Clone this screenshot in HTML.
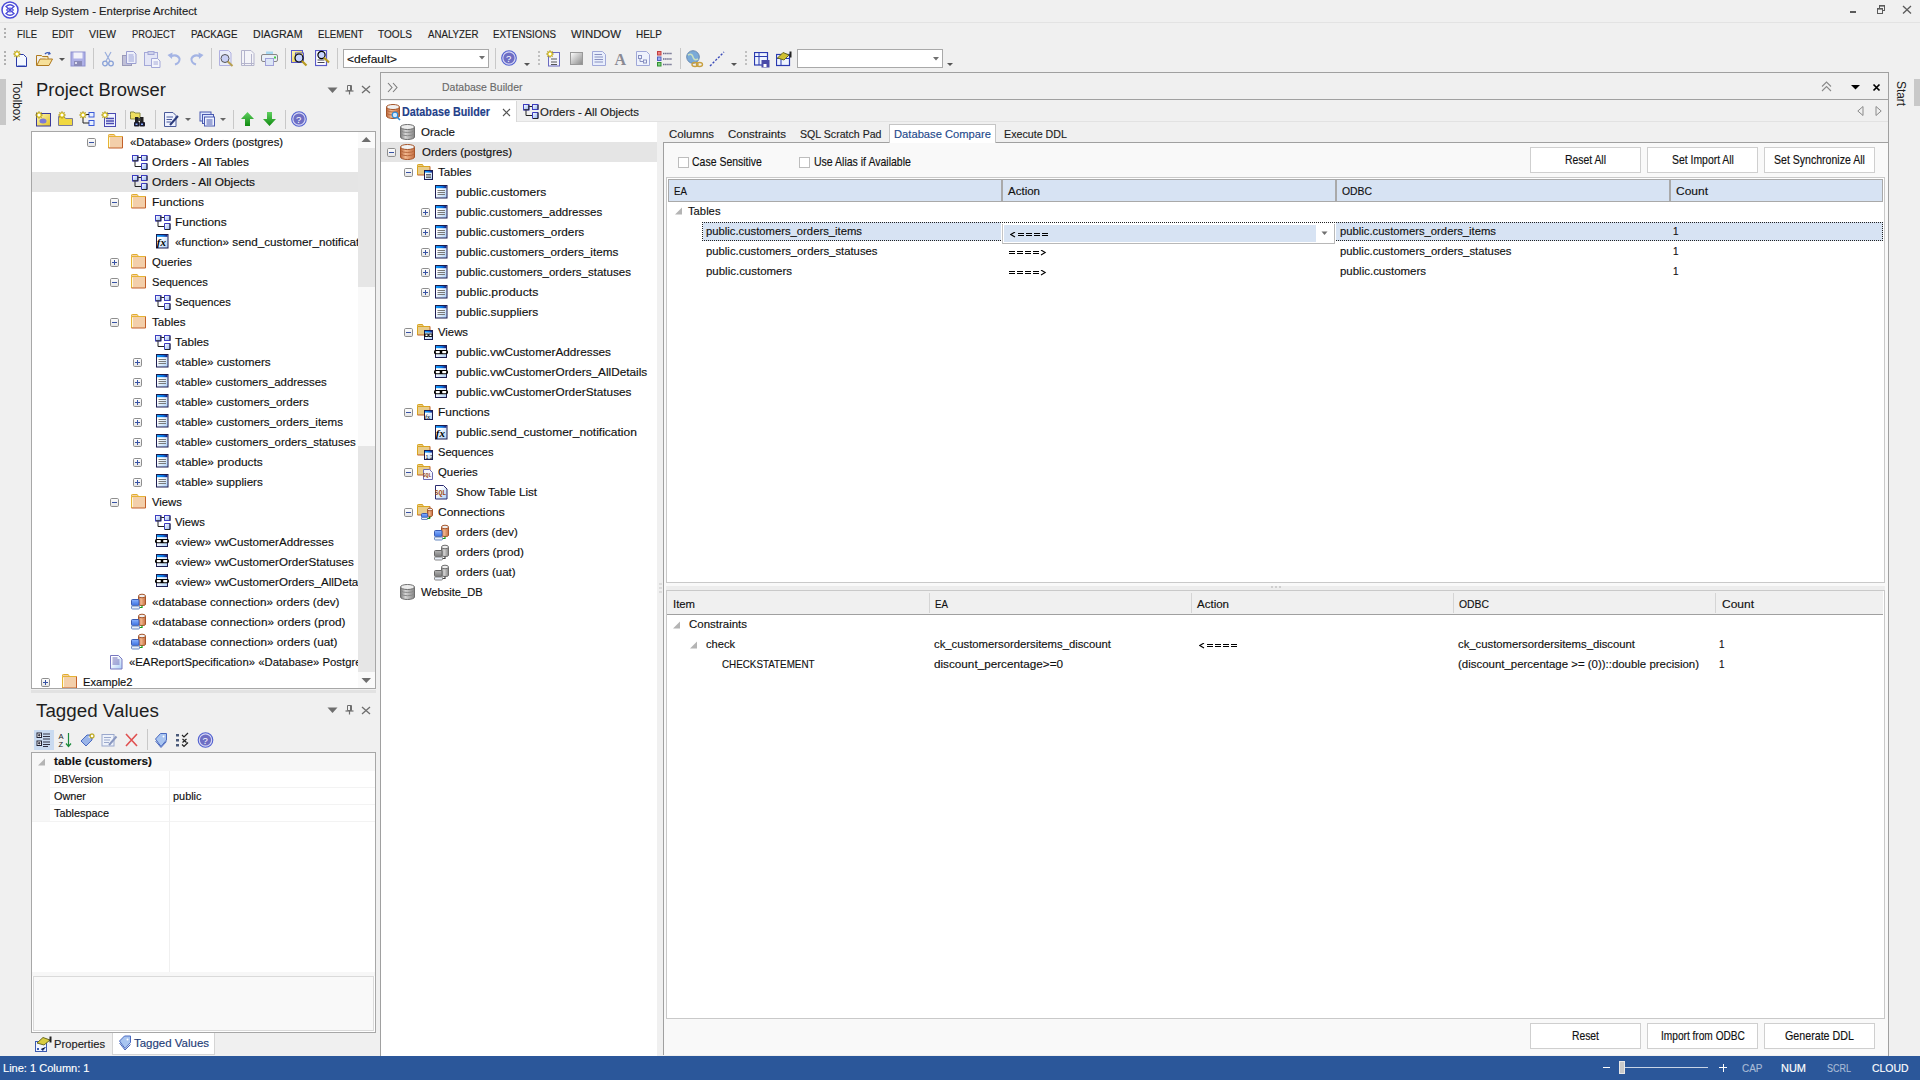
<!DOCTYPE html>
<html><head><meta charset="utf-8"><style>
html,body{margin:0;padding:0;}
body{width:1920px;height:1080px;overflow:hidden;background:#f0f0f0;position:relative;font-family:"Liberation Sans",sans-serif;}
div{position:absolute;box-sizing:border-box;}
.t{white-space:pre;line-height:1;transform-origin:0 0;}
</style></head><body>
<svg width="0" height="0" style="position:absolute"><defs>
<linearGradient id="gTog" x1="0" y1="0" x2="0" y2="1"><stop offset="0" stop-color="#ffffff"/><stop offset="1" stop-color="#e4e4e4"/></linearGradient>
<linearGradient id="gCylO" x1="0" y1="0" x2="1" y2="0"><stop offset="0" stop-color="#b8653a"/><stop offset="0.35" stop-color="#f3b88e"/><stop offset="1" stop-color="#c46f42"/></linearGradient>
<linearGradient id="gCylG" x1="0" y1="0" x2="1" y2="0"><stop offset="0" stop-color="#7a7a7a"/><stop offset="0.35" stop-color="#d6d6d6"/><stop offset="1" stop-color="#868686"/></linearGradient>
<linearGradient id="gBar" x1="0" y1="0" x2="1" y2="0"><stop offset="0" stop-color="#10a0ff"/><stop offset="0.6" stop-color="#0a70e0"/><stop offset="1" stop-color="#141e7a"/></linearGradient>
<linearGradient id="gBody" x1="0" y1="0" x2="1" y2="1"><stop offset="0.3" stop-color="#ffffff"/><stop offset="1" stop-color="#a9cdf5"/></linearGradient>
<linearGradient id="gSq" x1="0" y1="0" x2="1" y2="1"><stop offset="0" stop-color="#ffffff"/><stop offset="1" stop-color="#8fb0f0"/></linearGradient>
<linearGradient id="gMon" x1="0" y1="0" x2="0" y2="1"><stop offset="0" stop-color="#8ab4ff"/><stop offset="1" stop-color="#3a6fe0"/></linearGradient>
<linearGradient id="gMonG" x1="0" y1="0" x2="0" y2="1"><stop offset="0" stop-color="#b8b8b8"/><stop offset="1" stop-color="#787878"/></linearGradient>
<linearGradient id="gHelp" x1="0" y1="0" x2="0" y2="1"><stop offset="0" stop-color="#9a9ae0"/><stop offset="1" stop-color="#5a5ab8"/></linearGradient>
<linearGradient id="gYel" x1="0" y1="0" x2="1" y2="1"><stop offset="0" stop-color="#fff8c0"/><stop offset="1" stop-color="#e0c020"/></linearGradient>
<linearGradient id="gGrn" x1="0" y1="0" x2="0" y2="1"><stop offset="0" stop-color="#60d060"/><stop offset="1" stop-color="#108a10"/></linearGradient>
</defs></svg>
<div style="left:0px;top:22px;width:1920px;height:1px;background:#e3e3e3"></div>
<div class="t" style="left:25px;top:6px;font-size:11.5px;color:#222;-webkit-text-stroke:0.15px #222;transform:scaleX(0.9822);">Help System - Enterprise Architect</div>
<div style="left:1850px;top:11px;width:6px;height:2px;background:#5a5a5a"></div>
<svg style="position:absolute;left:1876px;top:4px" width="10" height="11" viewBox="0 0 10 11"><rect x="3.5" y="1.5" width="5" height="5" fill="none" stroke="#5a5a5a"/><rect x="3" y="1" width="6" height="1.6" fill="#5a5a5a"/><rect x="1.5" y="4.5" width="5" height="5" fill="#f0f0f0" stroke="#5a5a5a"/><rect x="1" y="4" width="6" height="1.6" fill="#5a5a5a"/></svg>
<svg style="position:absolute;left:1902px;top:5px" width="10" height="9" viewBox="0 0 10 9"><path d="M1 1L9 8.5M9 1L1 8.5" stroke="#5a5a5a" stroke-width="1.3"/></svg>
<div style="left:4px;top:28px;width:2px;height:2px;background:#b0b0b0"></div>
<div style="left:4px;top:32px;width:2px;height:2px;background:#b0b0b0"></div>
<div style="left:4px;top:36px;width:2px;height:2px;background:#b0b0b0"></div>
<div class="t" style="left:17px;top:29px;font-size:11.4px;color:#1e1e1e;-webkit-text-stroke:0.15px #1e1e1e;transform:scaleX(0.8307);">FILE</div>
<div class="t" style="left:52px;top:29px;font-size:11.4px;color:#1e1e1e;-webkit-text-stroke:0.15px #1e1e1e;transform:scaleX(0.8472);">EDIT</div>
<div class="t" style="left:89px;top:29px;font-size:11.4px;color:#1e1e1e;-webkit-text-stroke:0.15px #1e1e1e;transform:scaleX(0.9267);">VIEW</div>
<div class="t" style="left:131.5px;top:29px;font-size:11.4px;color:#1e1e1e;-webkit-text-stroke:0.15px #1e1e1e;transform:scaleX(0.8176);">PROJECT</div>
<div class="t" style="left:190.5px;top:29px;font-size:11.4px;color:#1e1e1e;-webkit-text-stroke:0.15px #1e1e1e;transform:scaleX(0.8568);">PACKAGE</div>
<div class="t" style="left:252.5px;top:29px;font-size:11.4px;color:#1e1e1e;-webkit-text-stroke:0.15px #1e1e1e;transform:scaleX(0.9304);">DIAGRAM</div>
<div class="t" style="left:317.5px;top:29px;font-size:11.4px;color:#1e1e1e;-webkit-text-stroke:0.15px #1e1e1e;transform:scaleX(0.8450);">ELEMENT</div>
<div class="t" style="left:378px;top:29px;font-size:11.4px;color:#1e1e1e;-webkit-text-stroke:0.15px #1e1e1e;transform:scaleX(0.8846);">TOOLS</div>
<div class="t" style="left:427.5px;top:29px;font-size:11.4px;color:#1e1e1e;-webkit-text-stroke:0.15px #1e1e1e;transform:scaleX(0.8510);">ANALYZER</div>
<div class="t" style="left:493px;top:29px;font-size:11.4px;color:#1e1e1e;-webkit-text-stroke:0.15px #1e1e1e;transform:scaleX(0.8573);">EXTENSIONS</div>
<div class="t" style="left:571px;top:29px;font-size:11.4px;color:#1e1e1e;-webkit-text-stroke:0.15px #1e1e1e;transform:scaleX(0.9996);">WINDOW</div>
<div class="t" style="left:636px;top:29px;font-size:11.4px;color:#1e1e1e;-webkit-text-stroke:0.15px #1e1e1e;transform:scaleX(0.8730);">HELP</div>
<div style="left:4px;top:51px;width:2px;height:2px;background:#b0b0b0"></div>
<div style="left:4px;top:55px;width:2px;height:2px;background:#b0b0b0"></div>
<div style="left:4px;top:59px;width:2px;height:2px;background:#b0b0b0"></div>
<div style="left:4px;top:63px;width:2px;height:2px;background:#b0b0b0"></div>
<div style="left:93px;top:48px;width:1px;height:21px;background:#c8c8c8"></div>
<div style="left:211px;top:48px;width:1px;height:21px;background:#c8c8c8"></div>
<div style="left:285px;top:48px;width:1px;height:21px;background:#c8c8c8"></div>
<div style="left:337px;top:48px;width:1px;height:21px;background:#c8c8c8"></div>
<div style="left:495px;top:48px;width:1px;height:21px;background:#c8c8c8"></div>
<div style="left:680px;top:48px;width:1px;height:21px;background:#c8c8c8"></div>
<div style="left:343px;top:49px;width:146px;height:19px;background:#fff;border:1px solid #a9a9a9"></div>
<div class="t" style="left:347px;top:54px;font-size:11.5px;color:#111;-webkit-text-stroke:0.15px #111;transform:scaleX(1.0425);">&lt;default&gt;</div>
<svg style="position:absolute;left:479px;top:56px" width="7" height="4" viewBox="0 0 7 4"><path d="M0 0H6L3 3.5Z" fill="#707070"/></svg>
<div style="left:797px;top:49px;width:146px;height:19px;background:#fff;border:1px solid #a9a9a9"></div>
<svg style="position:absolute;left:933px;top:57px" width="7" height="4" viewBox="0 0 7 4"><path d="M0 0H6L3 3.5Z" fill="#707070"/></svg>
<svg style="position:absolute;left:947px;top:63px" width="7" height="4" viewBox="0 0 7 4"><path d="M0 0H6L3 3Z" fill="#555"/></svg>
<div style="left:0px;top:79px;width:6px;height:46px;background:#c8c8c8"></div>
<div class="t" style="left:22.5px;top:81px;font-size:12.5px;color:#222;transform:rotate(90deg) scaleX(0.93);transform-origin:0 0;">Toolbox</div>
<div class="t" style="left:36px;top:81px;font-size:18.8px;color:#1e1e1e;transform:scaleX(0.9797);">Project Browser</div>
<svg style="position:absolute;left:327px;top:87px" width="11" height="7" viewBox="0 0 11 7"><path d="M0.5 0.5H10.5L5.5 6Z" fill="#6e6e6e"/></svg>
<svg style="position:absolute;left:345px;top:84px" width="9" height="11" viewBox="0 0 9 11"><path d="M2.5 1.5H6.5V6.5H2.5Z" stroke="#6e6e6e" stroke-width="1" fill="none"/><path d="M5.5 1.5V6.5" stroke="#6e6e6e" stroke-width="1"/><path d="M0.5 7H8.5" stroke="#6e6e6e" stroke-width="1.2"/><path d="M4.5 7V10.5" stroke="#6e6e6e" stroke-width="1.2"/></svg>
<svg style="position:absolute;left:361px;top:85px" width="10" height="9" viewBox="0 0 10 9"><path d="M1 1L9 8M9 1L1 8" stroke="#6e6e6e" stroke-width="1.3"/></svg>
<div style="left:31px;top:131px;width:345px;height:558px;background:#fff;border:1px solid #a7a7a7"></div>
<div style="left:358px;top:132px;width:17px;height:556px;background:#e6e6e6"></div>
<div style="left:358px;top:132px;width:17px;height:16px;background:#fafafa"></div>
<svg style="position:absolute;left:361px;top:136px" width="11" height="7" viewBox="0 0 11 7"><path d="M0.5 6H10L5.25 1Z" fill="#6e6e6e"/></svg>
<div style="left:358px;top:287px;width:17px;height:159px;background:#f9f9f9"></div>
<div style="left:358px;top:672px;width:17px;height:16px;background:#fafafa"></div>
<svg style="position:absolute;left:361px;top:677px" width="11" height="7" viewBox="0 0 11 7"><path d="M0.5 1H10L5.25 6Z" fill="#6e6e6e"/></svg>
<div style="left:32px;top:172px;width:326px;height:20px;background:#e5e5e5"></div>
<div style="left:31px;top:690px;width:345px;height:3px;background:#e2e2e2"></div>
<div class="t" style="left:35.5px;top:702px;font-size:18.8px;color:#1e1e1e;transform:scaleX(1.0001);">Tagged Values</div>
<svg style="position:absolute;left:327px;top:707px" width="11" height="7" viewBox="0 0 11 7"><path d="M0.5 0.5H10.5L5.5 6Z" fill="#6e6e6e"/></svg>
<svg style="position:absolute;left:345px;top:704px" width="9" height="11" viewBox="0 0 9 11"><path d="M2.5 1.5H6.5V6.5H2.5Z" stroke="#6e6e6e" stroke-width="1" fill="none"/><path d="M5.5 1.5V6.5" stroke="#6e6e6e" stroke-width="1"/><path d="M0.5 7H8.5" stroke="#6e6e6e" stroke-width="1.2"/><path d="M4.5 7V10.5" stroke="#6e6e6e" stroke-width="1.2"/></svg>
<svg style="position:absolute;left:361px;top:706px" width="10" height="9" viewBox="0 0 10 9"><path d="M1 1L9 8M9 1L1 8" stroke="#6e6e6e" stroke-width="1.3"/></svg>
<div style="left:34px;top:730px;width:20px;height:20px;background:#c9daf0"></div>
<div style="left:147px;top:729px;width:1px;height:21px;background:#c8c8c8"></div>
<div style="left:31px;top:752px;width:345px;height:281px;background:#fff;border:1px solid #a7a7a7"></div>
<div style="left:32px;top:753px;width:343px;height:18px;background:#f7f7f7"></div>
<div style="left:32px;top:771px;width:18px;height:51px;background:#f7f7f7"></div>
<div style="left:32px;top:821px;width:343px;height:1px;background:#f3f3f3"></div>
<div style="left:50px;top:787px;width:325px;height:1px;background:#f3f3f3"></div>
<div style="left:50px;top:804px;width:325px;height:1px;background:#f3f3f3"></div>
<div style="left:169px;top:771px;width:1px;height:201px;background:#f0f0f0"></div>
<div style="left:32px;top:972px;width:343px;height:4px;background:#f7f7f7"></div>
<div style="left:33px;top:976px;width:341px;height:55px;background:#f9f9f9;border:1px solid #dadada"></div>
<svg style="position:absolute;left:38px;top:758px" width="8" height="8" viewBox="0 0 8 8"><path d="M7 0.5V7.5H0Z" fill="#b4b4b4"/></svg>
<div class="t" style="left:53.5px;top:755px;font-size:11.6px;color:#111;font-weight:bold;-webkit-text-stroke:0.15px #111;transform:scaleX(1.0135);">table (customers)</div>
<div class="t" style="left:54px;top:773px;font-size:11.6px;color:#111;-webkit-text-stroke:0.15px #111;transform:scaleX(0.8940);">DBVersion</div>
<div class="t" style="left:53.5px;top:790px;font-size:11.6px;color:#111;-webkit-text-stroke:0.15px #111;transform:scaleX(0.9366);">Owner</div>
<div class="t" style="left:173px;top:790px;font-size:11.6px;color:#111;-webkit-text-stroke:0.15px #111;transform:scaleX(0.9403);">public</div>
<div class="t" style="left:54px;top:807px;font-size:11.6px;color:#111;-webkit-text-stroke:0.15px #111;transform:scaleX(0.9372);">Tablespace</div>
<div style="left:112px;top:1033px;width:103px;height:22px;background:#fff;border:1px solid #d5d5d5;border-top:none"></div>
<div class="t" style="left:53.5px;top:1039px;font-size:11.5px;color:#222;-webkit-text-stroke:0.15px #222;transform:scaleX(0.9730);">Properties</div>
<div class="t" style="left:134px;top:1038px;font-size:11.5px;color:#1e3d78;-webkit-text-stroke:0.15px #1e3d78;transform:scaleX(0.9969);">Tagged Values</div>
<div style="left:380px;top:72px;width:1px;height:984px;background:#a0a0a0"></div>
<div style="left:0px;top:1056px;width:1920px;height:24px;background:#2b579a"></div>
<div class="t" style="left:2.5px;top:1063px;font-size:11.5px;color:#fff;-webkit-text-stroke:0.15px #fff;transform:scaleX(0.9596);">Line: 1 Column: 1</div>
<div style="left:1603px;top:1067px;width:7px;height:1px;background:#fff"></div>
<div style="left:1621px;top:1067px;width:87px;height:1px;background:#c8d4e6"></div>
<div style="left:1619px;top:1061px;width:6px;height:13px;background:#c9c9c9;border:1px solid #e8e8e8"></div>
<div style="left:1719px;top:1067px;width:8px;height:1px;background:#fff"></div>
<div style="left:1722.5px;top:1063.5px;width:1px;height:8px;background:#fff"></div>
<div class="t" style="left:1741.5px;top:1063px;font-size:11.5px;color:#a9bbd6;-webkit-text-stroke:0.15px #a9bbd6;transform:scaleX(0.8669);">CAP</div>
<div class="t" style="left:1781px;top:1063px;font-size:11.5px;color:#fff;-webkit-text-stroke:0.15px #fff;transform:scaleX(0.9545);">NUM</div>
<div class="t" style="left:1827px;top:1063px;font-size:11.5px;color:#a9bbd6;-webkit-text-stroke:0.15px #a9bbd6;transform:scaleX(0.7823);">SCRL</div>
<div class="t" style="left:1871.5px;top:1063px;font-size:11.5px;color:#fff;-webkit-text-stroke:0.15px #fff;transform:scaleX(0.9067);">CLOUD</div>
<div style="left:1914px;top:79px;width:6px;height:27px;background:#c8c8c8"></div>
<div class="t" style="left:1907px;top:81px;font-size:12.5px;color:#222;transform:rotate(90deg) scaleX(0.95);transform-origin:0 0;">Start</div>
<div style="left:381px;top:72px;width:1508px;height:984px;border-top:1px solid #a0a0a0;border-right:1px solid #a0a0a0;background:#f0f0f0"></div>
<div style="left:381px;top:99px;width:1507px;height:1px;background:#a0a0a0"></div>
<svg style="position:absolute;left:387px;top:82px" width="12" height="11" viewBox="0 0 12 11"><path d="M1 1L5 5.5L1 10M6 1L10 5.5L6 10" stroke="#7a7a7a" stroke-width="1.1" fill="none"/></svg>
<div class="t" style="left:442px;top:82px;font-size:11.5px;color:#6a6a6a;-webkit-text-stroke:0.15px #6a6a6a;transform:scaleX(0.9125);">Database Builder</div>
<svg style="position:absolute;left:1821px;top:81px" width="11" height="11" viewBox="0 0 11 11"><path d="M1 5.5L5.5 1L10 5.5M1 10L5.5 5.5L10 10" stroke="#8a8a8a" stroke-width="1.1" fill="none"/></svg>
<svg style="position:absolute;left:1851px;top:85px" width="9" height="5" viewBox="0 0 9 5"><path d="M0 0H9L4.5 4.5Z" fill="#000"/></svg>
<svg style="position:absolute;left:1872px;top:83px" width="9" height="9" viewBox="0 0 9 9"><path d="M1.5 1.5L7.5 7.5M7.5 1.5L1.5 7.5" stroke="#000" stroke-width="1.7"/></svg>
<div style="left:381px;top:121px;width:1507px;height:1px;background:#e2e2e2"></div>
<div style="left:381px;top:101px;width:136px;height:21px;background:#fff;border-right:1px solid #d8d8d8"></div>
<div class="t" style="left:402px;top:106px;font-size:12px;color:#1f3f8a;font-weight:bold;-webkit-text-stroke:0.15px #1f3f8a;transform:scaleX(0.8976);">Database Builder</div>
<svg style="position:absolute;left:502px;top:108px" width="9" height="9" viewBox="0 0 9 9"><path d="M1 1L8 8M8 1L1 8" stroke="#555" stroke-width="1.1"/></svg>
<div class="t" style="left:540px;top:107px;font-size:11.5px;color:#1e1e1e;-webkit-text-stroke:0.15px #1e1e1e;transform:scaleX(0.9930);">Orders - All Objects</div>
<svg style="position:absolute;left:1857px;top:106px" width="7" height="10" viewBox="0 0 7 10"><path d="M6 0.5V9.5L0.8 5Z" fill="none" stroke="#8a8a8a"/></svg>
<svg style="position:absolute;left:1875px;top:106px" width="7" height="10" viewBox="0 0 7 10"><path d="M1 0.5V9.5L6.2 5Z" fill="none" stroke="#8a8a8a"/></svg>
<div style="left:381px;top:122px;width:276px;height:934px;background:#fff"></div>
<div style="left:381px;top:142px;width:276px;height:20px;background:#e5e5e5"></div>
<div style="left:659px;top:583px;width:3px;height:2px;background:#dcdcdc"></div>
<div style="left:659px;top:587px;width:3px;height:2px;background:#dcdcdc"></div>
<div style="left:659px;top:591px;width:3px;height:2px;background:#dcdcdc"></div>
<div style="left:663px;top:142px;width:1225px;height:913px;background:#f9f9f9;border-left:1px solid #a0a0a0;border-top:1px solid #a0a0a0"></div>
<div style="left:889px;top:124px;width:107px;height:19px;background:#fff;border:1px solid #c5c5c5;border-bottom:none"></div>
<div class="t" style="left:669px;top:129px;font-size:11.5px;color:#1e1e1e;-webkit-text-stroke:0.15px #1e1e1e;transform:scaleX(0.9917);">Columns</div>
<div class="t" style="left:727.5px;top:129px;font-size:11.5px;color:#1e1e1e;-webkit-text-stroke:0.15px #1e1e1e;transform:scaleX(0.9972);">Constraints</div>
<div class="t" style="left:799.5px;top:129px;font-size:11.5px;color:#1e1e1e;-webkit-text-stroke:0.15px #1e1e1e;transform:scaleX(0.9217);">SQL Scratch Pad</div>
<div class="t" style="left:894px;top:129px;font-size:11.5px;color:#1e4a8c;-webkit-text-stroke:0.15px #1e4a8c;transform:scaleX(0.9727);">Database Compare</div>
<div class="t" style="left:1004px;top:129px;font-size:11.5px;color:#1e1e1e;-webkit-text-stroke:0.15px #1e1e1e;transform:scaleX(0.9298);">Execute DDL</div>
<div style="left:678px;top:157px;width:11px;height:11px;background:#fff;border:1px solid #bdbdbd"></div>
<div class="t" style="left:691.5px;top:156px;font-size:12.2px;color:#111;-webkit-text-stroke:0.15px #111;transform:scaleX(0.8602);">Case Sensitive</div>
<div style="left:799px;top:157px;width:11px;height:11px;background:#fff;border:1px solid #bdbdbd"></div>
<div class="t" style="left:813.5px;top:156px;font-size:12.2px;color:#111;-webkit-text-stroke:0.15px #111;transform:scaleX(0.8633);">Use Alias if Available</div>
<div style="left:1530px;top:147px;width:111px;height:26px;background:#fff;border:1px solid #cfcfcf"></div>
<div class="t" style="left:1565.0px;top:154px;font-size:12.2px;color:#111;-webkit-text-stroke:0.15px #111;transform:scaleX(0.8516);">Reset All</div>
<div style="left:1647px;top:147px;width:111px;height:26px;background:#fff;border:1px solid #cfcfcf"></div>
<div class="t" style="left:1671.5px;top:154px;font-size:12.2px;color:#111;-webkit-text-stroke:0.15px #111;transform:scaleX(0.8545);">Set Import All</div>
<div style="left:1764px;top:147px;width:111px;height:26px;background:#fff;border:1px solid #cfcfcf"></div>
<div class="t" style="left:1774.0px;top:154px;font-size:12.2px;color:#111;-webkit-text-stroke:0.15px #111;transform:scaleX(0.8657);">Set Synchronize All</div>
<div style="left:666px;top:177px;width:1219px;height:406px;background:#fff;border:1px solid #c9c9c9"></div>
<div style="left:668px;top:179px;width:1215px;height:23px;background:#d7e3f3;border:1px solid #a9a9a9"></div>
<div style="left:1001px;top:180px;width:2px;height:21px;background:#a9a9a9"></div>
<div style="left:1335px;top:180px;width:2px;height:21px;background:#a9a9a9"></div>
<div style="left:1669px;top:180px;width:2px;height:21px;background:#a9a9a9"></div>
<div class="t" style="left:673.5px;top:186px;font-size:11.5px;color:#111;-webkit-text-stroke:0.15px #111;transform:scaleX(0.8474);">EA</div>
<div class="t" style="left:1007.5px;top:186px;font-size:11.5px;color:#111;-webkit-text-stroke:0.15px #111;transform:scaleX(1.0012);">Action</div>
<div class="t" style="left:1341.5px;top:186px;font-size:11.5px;color:#111;-webkit-text-stroke:0.15px #111;transform:scaleX(0.9029);">ODBC</div>
<div class="t" style="left:1675.5px;top:186px;font-size:11.5px;color:#111;-webkit-text-stroke:0.15px #111;transform:scaleX(1.0428);">Count</div>
<svg style="position:absolute;left:675px;top:207px" width="8" height="8" viewBox="0 0 8 8"><path d="M7 0.5V7.5H0Z" fill="#b4b4b4"/></svg>
<div class="t" style="left:688px;top:206px;font-size:11.5px;color:#111;-webkit-text-stroke:0.15px #111;transform:scaleX(0.9776);">Tables</div>
<div style="left:703px;top:222px;width:298px;height:19px;background:#d7e3f3"></div>
<div style="left:1336px;top:222px;width:547px;height:19px;background:#d7e3f3"></div>
<div style="left:702px;top:222px;width:1181px;height:19px;border:1px dotted #222;border-left-width:1px"></div>
<div style="left:1002px;top:224px;width:333px;height:20px;background:#fff;border-left:1px solid #c4c4c4;border-right:1px solid #b8b8b8;border-bottom:1px solid #b8b8b8"></div>
<div style="left:1004px;top:225px;width:312px;height:17px;background:#d7e3f3"></div>
<svg style="position:absolute;left:1321px;top:231px" width="8" height="5" viewBox="0 0 8 5"><path d="M0.5 0.5H6.5L3.5 4Z" fill="#707070"/></svg>
<div class="t" style="left:705.5px;top:226px;font-size:11.5px;color:#111;-webkit-text-stroke:0.15px #111;transform:scaleX(0.9802);">public.customers_orders_items</div>
<div class="t" style="left:1339.5px;top:226px;font-size:11.5px;color:#111;-webkit-text-stroke:0.15px #111;transform:scaleX(0.9802);">public.customers_orders_items</div>
<div class="t" style="left:1673px;top:226px;font-size:11.5px;color:#111;-webkit-text-stroke:0.15px #111;transform:scaleX(0.8599);">1</div>
<div class="t" style="left:705.5px;top:246px;font-size:11.5px;color:#111;-webkit-text-stroke:0.15px #111;transform:scaleX(0.9828);">public.customers_orders_statuses</div>
<div class="t" style="left:1339.5px;top:246px;font-size:11.5px;color:#111;-webkit-text-stroke:0.15px #111;transform:scaleX(0.9828);">public.customers_orders_statuses</div>
<div class="t" style="left:1673px;top:246px;font-size:11.5px;color:#111;-webkit-text-stroke:0.15px #111;transform:scaleX(0.8599);">1</div>
<div class="t" style="left:705.5px;top:266px;font-size:11.5px;color:#111;-webkit-text-stroke:0.15px #111;transform:scaleX(0.9967);">public.customers</div>
<div class="t" style="left:1339.5px;top:266px;font-size:11.5px;color:#111;-webkit-text-stroke:0.15px #111;transform:scaleX(0.9967);">public.customers</div>
<div class="t" style="left:1673px;top:266px;font-size:11.5px;color:#111;-webkit-text-stroke:0.15px #111;transform:scaleX(0.8599);">1</div>
<svg style="position:absolute;left:1010px;top:232px" width="40" height="6" viewBox="0 0 40 6"><path d="M5 0L0.8 2.5L5 5" stroke="#000" stroke-width="1.1" fill="none"/><rect x="8" y="1" width="6" height="1" fill="#000"/><rect x="8" y="3" width="6" height="1" fill="#000"/><rect x="16" y="1" width="6" height="1" fill="#000"/><rect x="16" y="3" width="6" height="1" fill="#000"/><rect x="24" y="1" width="6" height="1" fill="#000"/><rect x="24" y="3" width="6" height="1" fill="#000"/><rect x="32" y="1" width="6" height="1" fill="#000"/><rect x="32" y="3" width="6" height="1" fill="#000"/></svg>
<svg style="position:absolute;left:1009px;top:250px" width="40" height="6" viewBox="0 0 40 6"><rect x="0" y="1" width="6" height="1" fill="#000"/><rect x="0" y="3" width="6" height="1" fill="#000"/><rect x="8" y="1" width="6" height="1" fill="#000"/><rect x="8" y="3" width="6" height="1" fill="#000"/><rect x="16" y="1" width="6" height="1" fill="#000"/><rect x="16" y="3" width="6" height="1" fill="#000"/><rect x="24" y="1" width="6" height="1" fill="#000"/><rect x="24" y="3" width="6" height="1" fill="#000"/><path d="M32 0L36.2 2.5L32 5" stroke="#000" stroke-width="1.1" fill="none"/></svg>
<svg style="position:absolute;left:1009px;top:270px" width="40" height="6" viewBox="0 0 40 6"><rect x="0" y="1" width="6" height="1" fill="#000"/><rect x="0" y="3" width="6" height="1" fill="#000"/><rect x="8" y="1" width="6" height="1" fill="#000"/><rect x="8" y="3" width="6" height="1" fill="#000"/><rect x="16" y="1" width="6" height="1" fill="#000"/><rect x="16" y="3" width="6" height="1" fill="#000"/><rect x="24" y="1" width="6" height="1" fill="#000"/><rect x="24" y="3" width="6" height="1" fill="#000"/><path d="M32 0L36.2 2.5L32 5" stroke="#000" stroke-width="1.1" fill="none"/></svg>
<div style="left:666px;top:586px;width:1219px;height:4px;background:#ededed"></div>
<div style="left:1271px;top:586px;width:2px;height:2px;background:#cfcfcf"></div>
<div style="left:1275px;top:586px;width:2px;height:2px;background:#cfcfcf"></div>
<div style="left:1279px;top:586px;width:2px;height:2px;background:#cfcfcf"></div>
<div style="left:666px;top:590px;width:1219px;height:429px;background:#fff;border:1px solid #c9c9c9"></div>
<div style="left:667px;top:591px;width:1216px;height:24px;background:#f0f0f0;border-bottom:1px solid #a0a0a0"></div>
<div style="left:929px;top:593px;width:1px;height:20px;background:#d5d5d5"></div>
<div style="left:1191px;top:593px;width:1px;height:20px;background:#d5d5d5"></div>
<div style="left:1453px;top:593px;width:1px;height:20px;background:#d5d5d5"></div>
<div style="left:1715px;top:593px;width:1px;height:20px;background:#d5d5d5"></div>
<div class="t" style="left:672.5px;top:599px;font-size:11.5px;color:#111;-webkit-text-stroke:0.15px #111;transform:scaleX(0.9836);">Item</div>
<div class="t" style="left:935px;top:599px;font-size:11.5px;color:#111;-webkit-text-stroke:0.15px #111;transform:scaleX(0.8474);">EA</div>
<div class="t" style="left:1197px;top:599px;font-size:11.5px;color:#111;-webkit-text-stroke:0.15px #111;transform:scaleX(1.0012);">Action</div>
<div class="t" style="left:1459px;top:599px;font-size:11.5px;color:#111;-webkit-text-stroke:0.15px #111;transform:scaleX(0.9029);">ODBC</div>
<div class="t" style="left:1721.5px;top:599px;font-size:11.5px;color:#111;-webkit-text-stroke:0.15px #111;transform:scaleX(1.0428);">Count</div>
<svg style="position:absolute;left:673px;top:621px" width="8" height="8" viewBox="0 0 8 8"><path d="M7 0.5V7.5H0Z" fill="#b4b4b4"/></svg>
<div class="t" style="left:688.5px;top:619px;font-size:11.5px;color:#111;-webkit-text-stroke:0.15px #111;transform:scaleX(0.9972);">Constraints</div>
<svg style="position:absolute;left:690px;top:641px" width="8" height="8" viewBox="0 0 8 8"><path d="M7 0.5V7.5H0Z" fill="#b4b4b4"/></svg>
<div class="t" style="left:705.5px;top:639px;font-size:11.5px;color:#111;-webkit-text-stroke:0.15px #111;transform:scaleX(0.9653);">check</div>
<svg style="position:absolute;left:1199px;top:643px" width="40" height="6" viewBox="0 0 40 6"><path d="M5 0L0.8 2.5L5 5" stroke="#000" stroke-width="1.1" fill="none"/><rect x="8" y="1" width="6" height="1" fill="#000"/><rect x="8" y="3" width="6" height="1" fill="#000"/><rect x="16" y="1" width="6" height="1" fill="#000"/><rect x="16" y="3" width="6" height="1" fill="#000"/><rect x="24" y="1" width="6" height="1" fill="#000"/><rect x="24" y="3" width="6" height="1" fill="#000"/><rect x="32" y="1" width="6" height="1" fill="#000"/><rect x="32" y="3" width="6" height="1" fill="#000"/></svg>
<div class="t" style="left:933.5px;top:639px;font-size:11.5px;color:#111;-webkit-text-stroke:0.15px #111;transform:scaleX(0.9820);">ck_customersordersitems_discount</div>
<div class="t" style="left:1457.5px;top:639px;font-size:11.5px;color:#111;-webkit-text-stroke:0.15px #111;transform:scaleX(0.9820);">ck_customersordersitems_discount</div>
<div class="t" style="left:1719px;top:639px;font-size:11.5px;color:#111;-webkit-text-stroke:0.15px #111;transform:scaleX(0.8599);">1</div>
<div class="t" style="left:722px;top:659px;font-size:11.5px;color:#111;-webkit-text-stroke:0.15px #111;transform:scaleX(0.8550);">CHECKSTATEMENT</div>
<div class="t" style="left:933.5px;top:659px;font-size:11.5px;color:#111;-webkit-text-stroke:0.15px #111;transform:scaleX(1.0189);">discount_percentage&gt;=0</div>
<div class="t" style="left:1457.5px;top:659px;font-size:11.5px;color:#111;-webkit-text-stroke:0.15px #111;transform:scaleX(0.9947);">(discount_percentage &gt;= (0))::double precision)</div>
<div class="t" style="left:1719px;top:659px;font-size:11.5px;color:#111;-webkit-text-stroke:0.15px #111;transform:scaleX(0.8599);">1</div>
<div style="left:1530px;top:1023px;width:111px;height:26px;background:#fff;border:1px solid #cfcfcf"></div>
<div class="t" style="left:1572.0px;top:1030px;font-size:12.2px;color:#111;-webkit-text-stroke:0.15px #111;transform:scaleX(0.8472);">Reset</div>
<div style="left:1647px;top:1023px;width:111px;height:26px;background:#fff;border:1px solid #cfcfcf"></div>
<div class="t" style="left:1660.5px;top:1030px;font-size:12.2px;color:#111;-webkit-text-stroke:0.15px #111;transform:scaleX(0.8317);">Import from ODBC</div>
<div style="left:1764px;top:1023px;width:111px;height:26px;background:#fff;border:1px solid #cfcfcf"></div>
<div class="t" style="left:1785.0px;top:1030px;font-size:12.2px;color:#111;-webkit-text-stroke:0.15px #111;transform:scaleX(0.8771);">Generate DDL</div>
<div style="left:32px;top:132px;width:326px;height:556px;overflow:hidden">
<svg style="position:absolute;left:55px;top:6px" width="9" height="9" viewBox="0 0 9 9"><rect x="0.5" y="0.5" width="8" height="8" rx="1.2" fill="url(#gTog)" stroke="#8e8e8e"/><path d="M2 4.5H7" stroke="#3853a4" stroke-width="1"/></svg>
<svg style="position:absolute;left:76px;top:2px" width="16" height="15" viewBox="0 0 16 15"><path d="M0.5 2.5V1.3Q0.5 0.5 1.3 0.5H6.2L7.5 2.5" fill="#f3cfaa" stroke="#e2ae2e"/><rect x="0.5" y="2.5" width="14" height="11.5" fill="#f3cfaa"/><path d="M0.5 14V2.5H14.5" stroke="#e6b433" fill="none"/><path d="M14.5 2.5V14H0.5" stroke="#c2602a" fill="none"/><path d="M1.5 3.5V13" stroke="#fff8d8" fill="none"/></svg>
<div class="t" style="left:97.5px;top:5px;font-size:11.5px;color:#111;-webkit-text-stroke:0.15px #111;transform:scaleX(0.9857);">«Database» Orders (postgres)</div>
<svg style="position:absolute;left:100px;top:23px" width="16" height="16" viewBox="0 0 16 16"><path d="M3 6V11.5H9M6 2.5H10" stroke="#222" stroke-width="1" fill="none"/><rect x="0.5" y="0.5" width="5.5" height="5.5" fill="url(#gSq)" stroke="#3c3cc0"/><rect x="9.5" y="0.5" width="5.5" height="5" fill="url(#gSq)" stroke="#3c3cc0"/><path d="M9.5 8.5H15V14.5H9.5Z" fill="url(#gSq)" stroke="#3c3cc0"/><path d="M15 1V5.5M10 14.5H15V8.5" stroke="#222" fill="none"/><path d="M5.8 1V5.8H1" stroke="#222" fill="none"/></svg>
<div class="t" style="left:120px;top:25px;font-size:11.5px;color:#111;-webkit-text-stroke:0.15px #111;transform:scaleX(1.0337);">Orders - All Tables</div>
<svg style="position:absolute;left:100px;top:43px" width="16" height="16" viewBox="0 0 16 16"><path d="M3 6V11.5H9M6 2.5H10" stroke="#222" stroke-width="1" fill="none"/><rect x="0.5" y="0.5" width="5.5" height="5.5" fill="url(#gSq)" stroke="#3c3cc0"/><rect x="9.5" y="0.5" width="5.5" height="5" fill="url(#gSq)" stroke="#3c3cc0"/><path d="M9.5 8.5H15V14.5H9.5Z" fill="url(#gSq)" stroke="#3c3cc0"/><path d="M15 1V5.5M10 14.5H15V8.5" stroke="#222" fill="none"/><path d="M5.8 1V5.8H1" stroke="#222" fill="none"/></svg>
<div class="t" style="left:120px;top:45px;font-size:11.5px;color:#111;-webkit-text-stroke:0.15px #111;transform:scaleX(1.0331);">Orders - All Objects</div>
<svg style="position:absolute;left:78px;top:66px" width="9" height="9" viewBox="0 0 9 9"><rect x="0.5" y="0.5" width="8" height="8" rx="1.2" fill="url(#gTog)" stroke="#8e8e8e"/><path d="M2 4.5H7" stroke="#3853a4" stroke-width="1"/></svg>
<svg style="position:absolute;left:99px;top:62px" width="16" height="15" viewBox="0 0 16 15"><path d="M0.5 2.5V1.3Q0.5 0.5 1.3 0.5H6.2L7.5 2.5" fill="#f3cfaa" stroke="#e2ae2e"/><rect x="0.5" y="2.5" width="14" height="11.5" fill="#f3cfaa"/><path d="M0.5 14V2.5H14.5" stroke="#e6b433" fill="none"/><path d="M14.5 2.5V14H0.5" stroke="#c2602a" fill="none"/><path d="M1.5 3.5V13" stroke="#fff8d8" fill="none"/></svg>
<div class="t" style="left:120px;top:65px;font-size:11.5px;color:#111;-webkit-text-stroke:0.15px #111;transform:scaleX(1.0409);">Functions</div>
<svg style="position:absolute;left:123px;top:83px" width="16" height="16" viewBox="0 0 16 16"><path d="M3 6V11.5H9M6 2.5H10" stroke="#222" stroke-width="1" fill="none"/><rect x="0.5" y="0.5" width="5.5" height="5.5" fill="url(#gSq)" stroke="#3c3cc0"/><rect x="9.5" y="0.5" width="5.5" height="5" fill="url(#gSq)" stroke="#3c3cc0"/><path d="M9.5 8.5H15V14.5H9.5Z" fill="url(#gSq)" stroke="#3c3cc0"/><path d="M15 1V5.5M10 14.5H15V8.5" stroke="#222" fill="none"/><path d="M5.8 1V5.8H1" stroke="#222" fill="none"/></svg>
<div class="t" style="left:143px;top:85px;font-size:11.5px;color:#111;-webkit-text-stroke:0.15px #111;transform:scaleX(1.0369);">Functions</div>
<svg style="position:absolute;left:124px;top:102px" width="13" height="15" viewBox="0 0 13 15"><rect x="0.5" y="0.5" width="11.5" height="13.5" fill="url(#gBody)" stroke="#1c1c50"/><rect x="1" y="1" width="10.5" height="1.8" fill="url(#gBar)"/><text x="0.8" y="11.8" font-family="Liberation Serif" font-style="italic" font-weight="bold" font-size="11" fill="#000">fx</text></svg>
<div class="t" style="left:143px;top:105px;font-size:11.5px;color:#111;-webkit-text-stroke:0.15px #111;transform:scaleX(1.0185);">«function» send_customer_notification</div>
<svg style="position:absolute;left:78px;top:126px" width="9" height="9" viewBox="0 0 9 9"><rect x="0.5" y="0.5" width="8" height="8" rx="1.2" fill="url(#gTog)" stroke="#8e8e8e"/><path d="M2 4.5H7" stroke="#3853a4" stroke-width="1"/><path d="M4.5 2V7" stroke="#3853a4" stroke-width="1"/></svg>
<svg style="position:absolute;left:99px;top:122px" width="16" height="15" viewBox="0 0 16 15"><path d="M0.5 2.5V1.3Q0.5 0.5 1.3 0.5H6.2L7.5 2.5" fill="#f3cfaa" stroke="#e2ae2e"/><rect x="0.5" y="2.5" width="14" height="11.5" fill="#f3cfaa"/><path d="M0.5 14V2.5H14.5" stroke="#e6b433" fill="none"/><path d="M14.5 2.5V14H0.5" stroke="#c2602a" fill="none"/><path d="M1.5 3.5V13" stroke="#fff8d8" fill="none"/></svg>
<div class="t" style="left:120px;top:125px;font-size:11.5px;color:#111;-webkit-text-stroke:0.15px #111;transform:scaleX(0.9909);">Queries</div>
<svg style="position:absolute;left:78px;top:146px" width="9" height="9" viewBox="0 0 9 9"><rect x="0.5" y="0.5" width="8" height="8" rx="1.2" fill="url(#gTog)" stroke="#8e8e8e"/><path d="M2 4.5H7" stroke="#3853a4" stroke-width="1"/></svg>
<svg style="position:absolute;left:99px;top:142px" width="16" height="15" viewBox="0 0 16 15"><path d="M0.5 2.5V1.3Q0.5 0.5 1.3 0.5H6.2L7.5 2.5" fill="#f3cfaa" stroke="#e2ae2e"/><rect x="0.5" y="2.5" width="14" height="11.5" fill="#f3cfaa"/><path d="M0.5 14V2.5H14.5" stroke="#e6b433" fill="none"/><path d="M14.5 2.5V14H0.5" stroke="#c2602a" fill="none"/><path d="M1.5 3.5V13" stroke="#fff8d8" fill="none"/></svg>
<div class="t" style="left:120px;top:145px;font-size:11.5px;color:#111;-webkit-text-stroke:0.15px #111;transform:scaleX(0.9696);">Sequences</div>
<svg style="position:absolute;left:123px;top:163px" width="16" height="16" viewBox="0 0 16 16"><path d="M3 6V11.5H9M6 2.5H10" stroke="#222" stroke-width="1" fill="none"/><rect x="0.5" y="0.5" width="5.5" height="5.5" fill="url(#gSq)" stroke="#3c3cc0"/><rect x="9.5" y="0.5" width="5.5" height="5" fill="url(#gSq)" stroke="#3c3cc0"/><path d="M9.5 8.5H15V14.5H9.5Z" fill="url(#gSq)" stroke="#3c3cc0"/><path d="M15 1V5.5M10 14.5H15V8.5" stroke="#222" fill="none"/><path d="M5.8 1V5.8H1" stroke="#222" fill="none"/></svg>
<div class="t" style="left:143px;top:165px;font-size:11.5px;color:#111;-webkit-text-stroke:0.15px #111;transform:scaleX(0.9679);">Sequences</div>
<svg style="position:absolute;left:78px;top:186px" width="9" height="9" viewBox="0 0 9 9"><rect x="0.5" y="0.5" width="8" height="8" rx="1.2" fill="url(#gTog)" stroke="#8e8e8e"/><path d="M2 4.5H7" stroke="#3853a4" stroke-width="1"/></svg>
<svg style="position:absolute;left:99px;top:182px" width="16" height="15" viewBox="0 0 16 15"><path d="M0.5 2.5V1.3Q0.5 0.5 1.3 0.5H6.2L7.5 2.5" fill="#f3cfaa" stroke="#e2ae2e"/><rect x="0.5" y="2.5" width="14" height="11.5" fill="#f3cfaa"/><path d="M0.5 14V2.5H14.5" stroke="#e6b433" fill="none"/><path d="M14.5 2.5V14H0.5" stroke="#c2602a" fill="none"/><path d="M1.5 3.5V13" stroke="#fff8d8" fill="none"/></svg>
<div class="t" style="left:120px;top:185px;font-size:11.5px;color:#111;-webkit-text-stroke:0.15px #111;transform:scaleX(1.0107);">Tables</div>
<svg style="position:absolute;left:123px;top:203px" width="16" height="16" viewBox="0 0 16 16"><path d="M3 6V11.5H9M6 2.5H10" stroke="#222" stroke-width="1" fill="none"/><rect x="0.5" y="0.5" width="5.5" height="5.5" fill="url(#gSq)" stroke="#3c3cc0"/><rect x="9.5" y="0.5" width="5.5" height="5" fill="url(#gSq)" stroke="#3c3cc0"/><path d="M9.5 8.5H15V14.5H9.5Z" fill="url(#gSq)" stroke="#3c3cc0"/><path d="M15 1V5.5M10 14.5H15V8.5" stroke="#222" fill="none"/><path d="M5.8 1V5.8H1" stroke="#222" fill="none"/></svg>
<div class="t" style="left:143px;top:205px;font-size:11.5px;color:#111;-webkit-text-stroke:0.15px #111;transform:scaleX(1.0228);">Tables</div>
<svg style="position:absolute;left:101px;top:226px" width="9" height="9" viewBox="0 0 9 9"><rect x="0.5" y="0.5" width="8" height="8" rx="1.2" fill="url(#gTog)" stroke="#8e8e8e"/><path d="M2 4.5H7" stroke="#3853a4" stroke-width="1"/><path d="M4.5 2V7" stroke="#3853a4" stroke-width="1"/></svg>
<svg style="position:absolute;left:124px;top:222px" width="13" height="14" viewBox="0 0 13 14"><rect x="0.5" y="0.5" width="11.5" height="12.5" fill="url(#gBody)" stroke="#1c1c50"/><rect x="1" y="1" width="10.5" height="2.2" fill="url(#gBar)"/><path d="M2.5 5.5H10M2.5 7.5H10M2.5 9.5H10" stroke="#7a7a7a" stroke-width="1"/></svg>
<div class="t" style="left:143px;top:225px;font-size:11.5px;color:#111;-webkit-text-stroke:0.15px #111;transform:scaleX(1.0184);">«table» customers</div>
<svg style="position:absolute;left:101px;top:246px" width="9" height="9" viewBox="0 0 9 9"><rect x="0.5" y="0.5" width="8" height="8" rx="1.2" fill="url(#gTog)" stroke="#8e8e8e"/><path d="M2 4.5H7" stroke="#3853a4" stroke-width="1"/><path d="M4.5 2V7" stroke="#3853a4" stroke-width="1"/></svg>
<svg style="position:absolute;left:124px;top:242px" width="13" height="14" viewBox="0 0 13 14"><rect x="0.5" y="0.5" width="11.5" height="12.5" fill="url(#gBody)" stroke="#1c1c50"/><rect x="1" y="1" width="10.5" height="2.2" fill="url(#gBar)"/><path d="M2.5 5.5H10M2.5 7.5H10M2.5 9.5H10" stroke="#7a7a7a" stroke-width="1"/></svg>
<div class="t" style="left:143px;top:245px;font-size:11.5px;color:#111;-webkit-text-stroke:0.15px #111;transform:scaleX(0.9888);">«table» customers_addresses</div>
<svg style="position:absolute;left:101px;top:266px" width="9" height="9" viewBox="0 0 9 9"><rect x="0.5" y="0.5" width="8" height="8" rx="1.2" fill="url(#gTog)" stroke="#8e8e8e"/><path d="M2 4.5H7" stroke="#3853a4" stroke-width="1"/><path d="M4.5 2V7" stroke="#3853a4" stroke-width="1"/></svg>
<svg style="position:absolute;left:124px;top:262px" width="13" height="14" viewBox="0 0 13 14"><rect x="0.5" y="0.5" width="11.5" height="12.5" fill="url(#gBody)" stroke="#1c1c50"/><rect x="1" y="1" width="10.5" height="2.2" fill="url(#gBar)"/><path d="M2.5 5.5H10M2.5 7.5H10M2.5 9.5H10" stroke="#7a7a7a" stroke-width="1"/></svg>
<div class="t" style="left:143px;top:265px;font-size:11.5px;color:#111;-webkit-text-stroke:0.15px #111;transform:scaleX(1.0056);">«table» customers_orders</div>
<svg style="position:absolute;left:101px;top:286px" width="9" height="9" viewBox="0 0 9 9"><rect x="0.5" y="0.5" width="8" height="8" rx="1.2" fill="url(#gTog)" stroke="#8e8e8e"/><path d="M2 4.5H7" stroke="#3853a4" stroke-width="1"/><path d="M4.5 2V7" stroke="#3853a4" stroke-width="1"/></svg>
<svg style="position:absolute;left:124px;top:282px" width="13" height="14" viewBox="0 0 13 14"><rect x="0.5" y="0.5" width="11.5" height="12.5" fill="url(#gBody)" stroke="#1c1c50"/><rect x="1" y="1" width="10.5" height="2.2" fill="url(#gBar)"/><path d="M2.5 5.5H10M2.5 7.5H10M2.5 9.5H10" stroke="#7a7a7a" stroke-width="1"/></svg>
<div class="t" style="left:143px;top:285px;font-size:11.5px;color:#111;-webkit-text-stroke:0.15px #111;transform:scaleX(1.0070);">«table» customers_orders_items</div>
<svg style="position:absolute;left:101px;top:306px" width="9" height="9" viewBox="0 0 9 9"><rect x="0.5" y="0.5" width="8" height="8" rx="1.2" fill="url(#gTog)" stroke="#8e8e8e"/><path d="M2 4.5H7" stroke="#3853a4" stroke-width="1"/><path d="M4.5 2V7" stroke="#3853a4" stroke-width="1"/></svg>
<svg style="position:absolute;left:124px;top:302px" width="13" height="14" viewBox="0 0 13 14"><rect x="0.5" y="0.5" width="11.5" height="12.5" fill="url(#gBody)" stroke="#1c1c50"/><rect x="1" y="1" width="10.5" height="2.2" fill="url(#gBar)"/><path d="M2.5 5.5H10M2.5 7.5H10M2.5 9.5H10" stroke="#7a7a7a" stroke-width="1"/></svg>
<div class="t" style="left:143px;top:305px;font-size:11.5px;color:#111;-webkit-text-stroke:0.15px #111;transform:scaleX(0.9918);">«table» customers_orders_statuses</div>
<svg style="position:absolute;left:101px;top:326px" width="9" height="9" viewBox="0 0 9 9"><rect x="0.5" y="0.5" width="8" height="8" rx="1.2" fill="url(#gTog)" stroke="#8e8e8e"/><path d="M2 4.5H7" stroke="#3853a4" stroke-width="1"/><path d="M4.5 2V7" stroke="#3853a4" stroke-width="1"/></svg>
<svg style="position:absolute;left:124px;top:322px" width="13" height="14" viewBox="0 0 13 14"><rect x="0.5" y="0.5" width="11.5" height="12.5" fill="url(#gBody)" stroke="#1c1c50"/><rect x="1" y="1" width="10.5" height="2.2" fill="url(#gBar)"/><path d="M2.5 5.5H10M2.5 7.5H10M2.5 9.5H10" stroke="#7a7a7a" stroke-width="1"/></svg>
<div class="t" style="left:143px;top:325px;font-size:11.5px;color:#111;-webkit-text-stroke:0.15px #111;transform:scaleX(1.0325);">«table» products</div>
<svg style="position:absolute;left:101px;top:346px" width="9" height="9" viewBox="0 0 9 9"><rect x="0.5" y="0.5" width="8" height="8" rx="1.2" fill="url(#gTog)" stroke="#8e8e8e"/><path d="M2 4.5H7" stroke="#3853a4" stroke-width="1"/><path d="M4.5 2V7" stroke="#3853a4" stroke-width="1"/></svg>
<svg style="position:absolute;left:124px;top:342px" width="13" height="14" viewBox="0 0 13 14"><rect x="0.5" y="0.5" width="11.5" height="12.5" fill="url(#gBody)" stroke="#1c1c50"/><rect x="1" y="1" width="10.5" height="2.2" fill="url(#gBar)"/><path d="M2.5 5.5H10M2.5 7.5H10M2.5 9.5H10" stroke="#7a7a7a" stroke-width="1"/></svg>
<div class="t" style="left:143px;top:345px;font-size:11.5px;color:#111;-webkit-text-stroke:0.15px #111;transform:scaleX(1.0098);">«table» suppliers</div>
<svg style="position:absolute;left:78px;top:366px" width="9" height="9" viewBox="0 0 9 9"><rect x="0.5" y="0.5" width="8" height="8" rx="1.2" fill="url(#gTog)" stroke="#8e8e8e"/><path d="M2 4.5H7" stroke="#3853a4" stroke-width="1"/></svg>
<svg style="position:absolute;left:99px;top:362px" width="16" height="15" viewBox="0 0 16 15"><path d="M0.5 2.5V1.3Q0.5 0.5 1.3 0.5H6.2L7.5 2.5" fill="#f3cfaa" stroke="#e2ae2e"/><rect x="0.5" y="2.5" width="14" height="11.5" fill="#f3cfaa"/><path d="M0.5 14V2.5H14.5" stroke="#e6b433" fill="none"/><path d="M14.5 2.5V14H0.5" stroke="#c2602a" fill="none"/><path d="M1.5 3.5V13" stroke="#fff8d8" fill="none"/></svg>
<div class="t" style="left:120px;top:365px;font-size:11.5px;color:#111;-webkit-text-stroke:0.15px #111;transform:scaleX(0.9813);">Views</div>
<svg style="position:absolute;left:123px;top:383px" width="16" height="16" viewBox="0 0 16 16"><path d="M3 6V11.5H9M6 2.5H10" stroke="#222" stroke-width="1" fill="none"/><rect x="0.5" y="0.5" width="5.5" height="5.5" fill="url(#gSq)" stroke="#3c3cc0"/><rect x="9.5" y="0.5" width="5.5" height="5" fill="url(#gSq)" stroke="#3c3cc0"/><path d="M9.5 8.5H15V14.5H9.5Z" fill="url(#gSq)" stroke="#3c3cc0"/><path d="M15 1V5.5M10 14.5H15V8.5" stroke="#222" fill="none"/><path d="M5.8 1V5.8H1" stroke="#222" fill="none"/></svg>
<div class="t" style="left:143px;top:385px;font-size:11.5px;color:#111;-webkit-text-stroke:0.15px #111;transform:scaleX(0.9780);">Views</div>
<svg style="position:absolute;left:123px;top:402px" width="15" height="14" viewBox="0 0 15 14"><rect x="1.5" y="0.5" width="11" height="12" fill="url(#gBody)" stroke="#1c1c50"/><rect x="2" y="1" width="10" height="2.2" fill="url(#gBar)"/><rect x="0" y="5" width="14" height="4.2" rx="1.6" fill="#000"/><rect x="1.8" y="6" width="4" height="2.2" rx="0.6" fill="#fff"/><rect x="8.2" y="6" width="4" height="2.2" rx="0.6" fill="#fff"/></svg>
<div class="t" style="left:143px;top:405px;font-size:11.5px;color:#111;-webkit-text-stroke:0.15px #111;transform:scaleX(1.0100);">«view» vwCustomerAddresses</div>
<svg style="position:absolute;left:123px;top:422px" width="15" height="14" viewBox="0 0 15 14"><rect x="1.5" y="0.5" width="11" height="12" fill="url(#gBody)" stroke="#1c1c50"/><rect x="2" y="1" width="10" height="2.2" fill="url(#gBar)"/><rect x="0" y="5" width="14" height="4.2" rx="1.6" fill="#000"/><rect x="1.8" y="6" width="4" height="2.2" rx="0.6" fill="#fff"/><rect x="8.2" y="6" width="4" height="2.2" rx="0.6" fill="#fff"/></svg>
<div class="t" style="left:143px;top:425px;font-size:11.5px;color:#111;-webkit-text-stroke:0.15px #111;transform:scaleX(1.0099);">«view» vwCustomerOrderStatuses</div>
<svg style="position:absolute;left:123px;top:442px" width="15" height="14" viewBox="0 0 15 14"><rect x="1.5" y="0.5" width="11" height="12" fill="url(#gBody)" stroke="#1c1c50"/><rect x="2" y="1" width="10" height="2.2" fill="url(#gBar)"/><rect x="0" y="5" width="14" height="4.2" rx="1.6" fill="#000"/><rect x="1.8" y="6" width="4" height="2.2" rx="0.6" fill="#fff"/><rect x="8.2" y="6" width="4" height="2.2" rx="0.6" fill="#fff"/></svg>
<div class="t" style="left:143px;top:445px;font-size:11.5px;color:#111;-webkit-text-stroke:0.15px #111;transform:scaleX(1.0100);">«view» vwCustomerOrders_AllDetails</div>
<svg style="position:absolute;left:99px;top:461px" width="17" height="17" viewBox="0 0 17 17"><path d="M7.5 3V11.5Q7.5 12.5 11 12.5T14.5 11.5V3" fill="url(#gCylO)" stroke="#a5552a"/><ellipse cx="11" cy="3" rx="3.5" ry="1.8" fill="#eee" stroke="#a5552a"/><path d="M11 12.5V14.5H7" stroke="#1a9a1a" fill="none" stroke-width="1.2"/><rect x="0.5" y="6.5" width="7.5" height="6" rx="1" fill="url(#gMon)" stroke="#3a5ab0"/><rect x="0.5" y="13" width="8" height="3" rx="1" fill="#e8eef8" stroke="#6a8ac0"/></svg>
<div class="t" style="left:120px;top:465px;font-size:11.5px;color:#111;-webkit-text-stroke:0.15px #111;transform:scaleX(1.0183);">«database connection» orders (dev)</div>
<svg style="position:absolute;left:99px;top:481px" width="17" height="17" viewBox="0 0 17 17"><path d="M7.5 3V11.5Q7.5 12.5 11 12.5T14.5 11.5V3" fill="url(#gCylO)" stroke="#a5552a"/><ellipse cx="11" cy="3" rx="3.5" ry="1.8" fill="#eee" stroke="#a5552a"/><path d="M11 12.5V14.5H7" stroke="#1a9a1a" fill="none" stroke-width="1.2"/><rect x="0.5" y="6.5" width="7.5" height="6" rx="1" fill="url(#gMon)" stroke="#3a5ab0"/><rect x="0.5" y="13" width="8" height="3" rx="1" fill="#e8eef8" stroke="#6a8ac0"/></svg>
<div class="t" style="left:120px;top:485px;font-size:11.5px;color:#111;-webkit-text-stroke:0.15px #111;transform:scaleX(1.0260);">«database connection» orders (prod)</div>
<svg style="position:absolute;left:99px;top:501px" width="17" height="17" viewBox="0 0 17 17"><path d="M7.5 3V11.5Q7.5 12.5 11 12.5T14.5 11.5V3" fill="url(#gCylO)" stroke="#a5552a"/><ellipse cx="11" cy="3" rx="3.5" ry="1.8" fill="#eee" stroke="#a5552a"/><path d="M11 12.5V14.5H7" stroke="#1a9a1a" fill="none" stroke-width="1.2"/><rect x="0.5" y="6.5" width="7.5" height="6" rx="1" fill="url(#gMon)" stroke="#3a5ab0"/><rect x="0.5" y="13" width="8" height="3" rx="1" fill="#e8eef8" stroke="#6a8ac0"/></svg>
<div class="t" style="left:120px;top:505px;font-size:11.5px;color:#111;-webkit-text-stroke:0.15px #111;transform:scaleX(1.0217);">«database connection» orders (uat)</div>
<svg style="position:absolute;left:78px;top:523px" width="13" height="15" viewBox="0 0 13 15"><path d="M0.5 0.5H8.5L12 4V14H0.5Z" fill="url(#gBody)" stroke="#7878c0"/><path d="M2.5 3H7.5M2.5 5H9.5M2.5 7H9.5M2.5 9H9.5" stroke="#6a6ab8"/></svg>
<div class="t" style="left:97px;top:525px;font-size:11.5px;color:#111;-webkit-text-stroke:0.15px #111;transform:scaleX(0.9857);">«EAReportSpecification» «Database» PostgreSQL</div>
<svg style="position:absolute;left:9px;top:546px" width="9" height="9" viewBox="0 0 9 9"><rect x="0.5" y="0.5" width="8" height="8" rx="1.2" fill="url(#gTog)" stroke="#8e8e8e"/><path d="M2 4.5H7" stroke="#3853a4" stroke-width="1"/><path d="M4.5 2V7" stroke="#3853a4" stroke-width="1"/></svg>
<svg style="position:absolute;left:30px;top:542px" width="16" height="15" viewBox="0 0 16 15"><path d="M0.5 2.5V1.3Q0.5 0.5 1.3 0.5H6.2L7.5 2.5" fill="#f3cfaa" stroke="#e2ae2e"/><rect x="0.5" y="2.5" width="14" height="11.5" fill="#f3cfaa"/><path d="M0.5 14V2.5H14.5" stroke="#e6b433" fill="none"/><path d="M14.5 2.5V14H0.5" stroke="#c2602a" fill="none"/><path d="M1.5 3.5V13" stroke="#fff8d8" fill="none"/></svg>
<div class="t" style="left:51px;top:545px;font-size:11.5px;color:#111;-webkit-text-stroke:0.15px #111;transform:scaleX(0.9679);">Example2</div>
</div>
<svg style="position:absolute;left:400px;top:124px" width="15" height="16" viewBox="0 0 15 16"><path d="M0.5 3.0V13.0A7.0 2.5 0 0 0 14.5 13.0V3.0" fill="url(#gCylG)" stroke="#6e6e6e"/><path d="M0.8 6.72A7.0 2.5 0 0 0 14.2 6.72M0.8 9.92A7.0 2.5 0 0 0 14.2 9.92" stroke="#8a8a8a" fill="none"/><ellipse cx="7.5" cy="3.0" rx="7.0" ry="2.5" fill="#ececec" stroke="#6e6e6e"/></svg>
<div class="t" style="left:421px;top:127px;font-size:11.5px;color:#111;-webkit-text-stroke:0.15px #111;transform:scaleX(1.0038);">Oracle</div>
<svg style="position:absolute;left:387px;top:148px" width="9" height="9" viewBox="0 0 9 9"><rect x="0.5" y="0.5" width="8" height="8" rx="1.2" fill="url(#gTog)" stroke="#8e8e8e"/><path d="M2 4.5H7" stroke="#3853a4" stroke-width="1"/></svg>
<svg style="position:absolute;left:400px;top:144px" width="15" height="16" viewBox="0 0 15 16"><path d="M0.5 3.0V13.0A7.0 2.5 0 0 0 14.5 13.0V3.0" fill="url(#gCylO)" stroke="#a5552a"/><path d="M0.8 6.72A7.0 2.5 0 0 0 14.2 6.72M0.8 9.92A7.0 2.5 0 0 0 14.2 9.92" stroke="#b8683e" fill="none"/><ellipse cx="7.5" cy="3.0" rx="7.0" ry="2.5" fill="#f2f2f2" stroke="#a5552a"/></svg>
<div class="t" style="left:421.5px;top:147px;font-size:11.5px;color:#111;-webkit-text-stroke:0.15px #111;transform:scaleX(0.9988);">Orders (postgres)</div>
<svg style="position:absolute;left:404px;top:168px" width="9" height="9" viewBox="0 0 9 9"><rect x="0.5" y="0.5" width="8" height="8" rx="1.2" fill="url(#gTog)" stroke="#8e8e8e"/><path d="M2 4.5H7" stroke="#3853a4" stroke-width="1"/></svg>
<svg style="position:absolute;left:417px;top:164px" width="14" height="12" viewBox="0 0 14 12"><path d="M0.5 2.5V1.2Q0.5 0.5 1.2 0.5H5.5L6.5 2.5" fill="#e8cc8a" stroke="#d9a520"/><rect x="0.5" y="2.5" width="12.5" height="8.5" fill="#e8cc8a"/><path d="M0.5 11V2.5H13" stroke="#d9a520" fill="none"/><path d="M13 2.5V11H0.5" stroke="#c0602a" fill="none"/></svg>
<svg style="position:absolute;left:424px;top:170px" width="10" height="11" viewBox="0 0 10 11"><rect x="0.5" y="0.5" width="8" height="9" fill="url(#gBody)" stroke="#1c1c50"/><rect x="1" y="1" width="7" height="1.6" fill="url(#gBar)"/><path d="M2 4.5H7M2 6H7M2 7.5H7" stroke="#6a6a6a"/></svg>
<div class="t" style="left:438px;top:167px;font-size:11.5px;color:#111;-webkit-text-stroke:0.15px #111;transform:scaleX(1.0077);">Tables</div>
<svg style="position:absolute;left:435px;top:185px" width="13" height="14" viewBox="0 0 13 14"><rect x="0.5" y="0.5" width="11.5" height="12.5" fill="url(#gBody)" stroke="#1c1c50"/><rect x="1" y="1" width="10.5" height="2.2" fill="url(#gBar)"/><path d="M2.5 5.5H10M2.5 7.5H10M2.5 9.5H10" stroke="#7a7a7a" stroke-width="1"/></svg>
<div class="t" style="left:455.5px;top:187px;font-size:11.5px;color:#111;-webkit-text-stroke:0.15px #111;transform:scaleX(1.0454);">public.customers</div>
<svg style="position:absolute;left:421px;top:208px" width="9" height="9" viewBox="0 0 9 9"><rect x="0.5" y="0.5" width="8" height="8" rx="1.2" fill="url(#gTog)" stroke="#8e8e8e"/><path d="M2 4.5H7" stroke="#3853a4" stroke-width="1"/><path d="M4.5 2V7" stroke="#3853a4" stroke-width="1"/></svg>
<svg style="position:absolute;left:435px;top:205px" width="13" height="14" viewBox="0 0 13 14"><rect x="0.5" y="0.5" width="11.5" height="12.5" fill="url(#gBody)" stroke="#1c1c50"/><rect x="1" y="1" width="10.5" height="2.2" fill="url(#gBar)"/><path d="M2.5 5.5H10M2.5 7.5H10M2.5 9.5H10" stroke="#7a7a7a" stroke-width="1"/></svg>
<div class="t" style="left:455.5px;top:207px;font-size:11.5px;color:#111;-webkit-text-stroke:0.15px #111;transform:scaleX(1.0031);">public.customers_addresses</div>
<svg style="position:absolute;left:421px;top:228px" width="9" height="9" viewBox="0 0 9 9"><rect x="0.5" y="0.5" width="8" height="8" rx="1.2" fill="url(#gTog)" stroke="#8e8e8e"/><path d="M2 4.5H7" stroke="#3853a4" stroke-width="1"/><path d="M4.5 2V7" stroke="#3853a4" stroke-width="1"/></svg>
<svg style="position:absolute;left:435px;top:225px" width="13" height="14" viewBox="0 0 13 14"><rect x="0.5" y="0.5" width="11.5" height="12.5" fill="url(#gBody)" stroke="#1c1c50"/><rect x="1" y="1" width="10.5" height="2.2" fill="url(#gBar)"/><path d="M2.5 5.5H10M2.5 7.5H10M2.5 9.5H10" stroke="#7a7a7a" stroke-width="1"/></svg>
<div class="t" style="left:455.5px;top:227px;font-size:11.5px;color:#111;-webkit-text-stroke:0.15px #111;transform:scaleX(1.0233);">public.customers_orders</div>
<svg style="position:absolute;left:421px;top:248px" width="9" height="9" viewBox="0 0 9 9"><rect x="0.5" y="0.5" width="8" height="8" rx="1.2" fill="url(#gTog)" stroke="#8e8e8e"/><path d="M2 4.5H7" stroke="#3853a4" stroke-width="1"/><path d="M4.5 2V7" stroke="#3853a4" stroke-width="1"/></svg>
<svg style="position:absolute;left:435px;top:245px" width="13" height="14" viewBox="0 0 13 14"><rect x="0.5" y="0.5" width="11.5" height="12.5" fill="url(#gBody)" stroke="#1c1c50"/><rect x="1" y="1" width="10.5" height="2.2" fill="url(#gBar)"/><path d="M2.5 5.5H10M2.5 7.5H10M2.5 9.5H10" stroke="#7a7a7a" stroke-width="1"/></svg>
<div class="t" style="left:455.5px;top:247px;font-size:11.5px;color:#111;-webkit-text-stroke:0.15px #111;transform:scaleX(1.0198);">public.customers_orders_items</div>
<svg style="position:absolute;left:421px;top:268px" width="9" height="9" viewBox="0 0 9 9"><rect x="0.5" y="0.5" width="8" height="8" rx="1.2" fill="url(#gTog)" stroke="#8e8e8e"/><path d="M2 4.5H7" stroke="#3853a4" stroke-width="1"/><path d="M4.5 2V7" stroke="#3853a4" stroke-width="1"/></svg>
<svg style="position:absolute;left:435px;top:265px" width="13" height="14" viewBox="0 0 13 14"><rect x="0.5" y="0.5" width="11.5" height="12.5" fill="url(#gBody)" stroke="#1c1c50"/><rect x="1" y="1" width="10.5" height="2.2" fill="url(#gBar)"/><path d="M2.5 5.5H10M2.5 7.5H10M2.5 9.5H10" stroke="#7a7a7a" stroke-width="1"/></svg>
<div class="t" style="left:455.5px;top:267px;font-size:11.5px;color:#111;-webkit-text-stroke:0.15px #111;transform:scaleX(1.0023);">public.customers_orders_statuses</div>
<svg style="position:absolute;left:421px;top:288px" width="9" height="9" viewBox="0 0 9 9"><rect x="0.5" y="0.5" width="8" height="8" rx="1.2" fill="url(#gTog)" stroke="#8e8e8e"/><path d="M2 4.5H7" stroke="#3853a4" stroke-width="1"/><path d="M4.5 2V7" stroke="#3853a4" stroke-width="1"/></svg>
<svg style="position:absolute;left:435px;top:285px" width="13" height="14" viewBox="0 0 13 14"><rect x="0.5" y="0.5" width="11.5" height="12.5" fill="url(#gBody)" stroke="#1c1c50"/><rect x="1" y="1" width="10.5" height="2.2" fill="url(#gBar)"/><path d="M2.5 5.5H10M2.5 7.5H10M2.5 9.5H10" stroke="#7a7a7a" stroke-width="1"/></svg>
<div class="t" style="left:455.5px;top:287px;font-size:11.5px;color:#111;-webkit-text-stroke:0.15px #111;transform:scaleX(1.0640);">public.products</div>
<svg style="position:absolute;left:435px;top:305px" width="13" height="14" viewBox="0 0 13 14"><rect x="0.5" y="0.5" width="11.5" height="12.5" fill="url(#gBody)" stroke="#1c1c50"/><rect x="1" y="1" width="10.5" height="2.2" fill="url(#gBar)"/><path d="M2.5 5.5H10M2.5 7.5H10M2.5 9.5H10" stroke="#7a7a7a" stroke-width="1"/></svg>
<div class="t" style="left:455.5px;top:307px;font-size:11.5px;color:#111;-webkit-text-stroke:0.15px #111;transform:scaleX(1.0383);">public.suppliers</div>
<svg style="position:absolute;left:404px;top:328px" width="9" height="9" viewBox="0 0 9 9"><rect x="0.5" y="0.5" width="8" height="8" rx="1.2" fill="url(#gTog)" stroke="#8e8e8e"/><path d="M2 4.5H7" stroke="#3853a4" stroke-width="1"/></svg>
<svg style="position:absolute;left:417px;top:324px" width="14" height="12" viewBox="0 0 14 12"><path d="M0.5 2.5V1.2Q0.5 0.5 1.2 0.5H5.5L6.5 2.5" fill="#e8cc8a" stroke="#d9a520"/><rect x="0.5" y="2.5" width="12.5" height="8.5" fill="#e8cc8a"/><path d="M0.5 11V2.5H13" stroke="#d9a520" fill="none"/><path d="M13 2.5V11H0.5" stroke="#c0602a" fill="none"/></svg>
<svg style="position:absolute;left:424px;top:330px" width="10" height="11" viewBox="0 0 10 11"><rect x="0.5" y="0.5" width="8" height="9" fill="url(#gBody)" stroke="#1c1c50"/><rect x="1" y="1" width="7" height="1.6" fill="url(#gBar)"/><path d="M0 5H9" stroke="#000"/><rect x="1" y="4" width="3" height="2.5" fill="#fff" stroke="#000" stroke-width="0.9"/><rect x="5" y="4" width="3" height="2.5" fill="#fff" stroke="#000" stroke-width="0.9"/></svg>
<div class="t" style="left:438px;top:327px;font-size:11.5px;color:#111;-webkit-text-stroke:0.15px #111;transform:scaleX(0.9846);">Views</div>
<svg style="position:absolute;left:434px;top:345px" width="15" height="14" viewBox="0 0 15 14"><rect x="1.5" y="0.5" width="11" height="12" fill="url(#gBody)" stroke="#1c1c50"/><rect x="2" y="1" width="10" height="2.2" fill="url(#gBar)"/><rect x="0" y="5" width="14" height="4.2" rx="1.6" fill="#000"/><rect x="1.8" y="6" width="4" height="2.2" rx="0.6" fill="#fff"/><rect x="8.2" y="6" width="4" height="2.2" rx="0.6" fill="#fff"/></svg>
<div class="t" style="left:455.5px;top:347px;font-size:11.5px;color:#111;-webkit-text-stroke:0.15px #111;transform:scaleX(1.0232);">public.vwCustomerAddresses</div>
<svg style="position:absolute;left:434px;top:365px" width="15" height="14" viewBox="0 0 15 14"><rect x="1.5" y="0.5" width="11" height="12" fill="url(#gBody)" stroke="#1c1c50"/><rect x="2" y="1" width="10" height="2.2" fill="url(#gBar)"/><rect x="0" y="5" width="14" height="4.2" rx="1.6" fill="#000"/><rect x="1.8" y="6" width="4" height="2.2" rx="0.6" fill="#fff"/><rect x="8.2" y="6" width="4" height="2.2" rx="0.6" fill="#fff"/></svg>
<div class="t" style="left:455.5px;top:367px;font-size:11.5px;color:#111;-webkit-text-stroke:0.15px #111;transform:scaleX(1.0245);">public.vwCustomerOrders_AllDetails</div>
<svg style="position:absolute;left:434px;top:385px" width="15" height="14" viewBox="0 0 15 14"><rect x="1.5" y="0.5" width="11" height="12" fill="url(#gBody)" stroke="#1c1c50"/><rect x="2" y="1" width="10" height="2.2" fill="url(#gBar)"/><rect x="0" y="5" width="14" height="4.2" rx="1.6" fill="#000"/><rect x="1.8" y="6" width="4" height="2.2" rx="0.6" fill="#fff"/><rect x="8.2" y="6" width="4" height="2.2" rx="0.6" fill="#fff"/></svg>
<div class="t" style="left:455.5px;top:387px;font-size:11.5px;color:#111;-webkit-text-stroke:0.15px #111;transform:scaleX(1.0246);">public.vwCustomerOrderStatuses</div>
<svg style="position:absolute;left:404px;top:408px" width="9" height="9" viewBox="0 0 9 9"><rect x="0.5" y="0.5" width="8" height="8" rx="1.2" fill="url(#gTog)" stroke="#8e8e8e"/><path d="M2 4.5H7" stroke="#3853a4" stroke-width="1"/></svg>
<svg style="position:absolute;left:417px;top:404px" width="14" height="12" viewBox="0 0 14 12"><path d="M0.5 2.5V1.2Q0.5 0.5 1.2 0.5H5.5L6.5 2.5" fill="#e8cc8a" stroke="#d9a520"/><rect x="0.5" y="2.5" width="12.5" height="8.5" fill="#e8cc8a"/><path d="M0.5 11V2.5H13" stroke="#d9a520" fill="none"/><path d="M13 2.5V11H0.5" stroke="#c0602a" fill="none"/></svg>
<svg style="position:absolute;left:424px;top:410px" width="10" height="11" viewBox="0 0 10 11"><rect x="0.5" y="0.5" width="8" height="9" fill="url(#gBody)" stroke="#1c1c50"/><rect x="1" y="1" width="7" height="1.6" fill="url(#gBar)"/><text x="1" y="8.5" font-family="Liberation Serif" font-style="italic" font-size="7" fill="#000">fx</text></svg>
<div class="t" style="left:438px;top:407px;font-size:11.5px;color:#111;-webkit-text-stroke:0.15px #111;transform:scaleX(1.0369);">Functions</div>
<svg style="position:absolute;left:435px;top:425px" width="13" height="15" viewBox="0 0 13 15"><rect x="0.5" y="0.5" width="11.5" height="13.5" fill="url(#gBody)" stroke="#1c1c50"/><rect x="1" y="1" width="10.5" height="1.8" fill="url(#gBar)"/><text x="0.8" y="11.8" font-family="Liberation Serif" font-style="italic" font-weight="bold" font-size="11" fill="#000">fx</text></svg>
<div class="t" style="left:455.5px;top:427px;font-size:11.5px;color:#111;-webkit-text-stroke:0.15px #111;transform:scaleX(1.0442);">public.send_customer_notification</div>
<svg style="position:absolute;left:417px;top:444px" width="14" height="12" viewBox="0 0 14 12"><path d="M0.5 2.5V1.2Q0.5 0.5 1.2 0.5H5.5L6.5 2.5" fill="#e8cc8a" stroke="#d9a520"/><rect x="0.5" y="2.5" width="12.5" height="8.5" fill="#e8cc8a"/><path d="M0.5 11V2.5H13" stroke="#d9a520" fill="none"/><path d="M13 2.5V11H0.5" stroke="#c0602a" fill="none"/></svg>
<svg style="position:absolute;left:424px;top:450px" width="10" height="11" viewBox="0 0 10 11"><rect x="0.5" y="0.5" width="8" height="9" fill="url(#gBody)" stroke="#1c1c50"/><rect x="1" y="1" width="7" height="1.6" fill="url(#gBar)"/><text x="1.5" y="8.5" font-family="Liberation Sans" font-size="5.5" fill="#222">1,2</text></svg>
<div class="t" style="left:438px;top:447px;font-size:11.5px;color:#111;-webkit-text-stroke:0.15px #111;transform:scaleX(0.9662);">Sequences</div>
<svg style="position:absolute;left:404px;top:468px" width="9" height="9" viewBox="0 0 9 9"><rect x="0.5" y="0.5" width="8" height="8" rx="1.2" fill="url(#gTog)" stroke="#8e8e8e"/><path d="M2 4.5H7" stroke="#3853a4" stroke-width="1"/></svg>
<svg style="position:absolute;left:417px;top:464px" width="14" height="12" viewBox="0 0 14 12"><path d="M0.5 2.5V1.2Q0.5 0.5 1.2 0.5H5.5L6.5 2.5" fill="#e8cc8a" stroke="#d9a520"/><rect x="0.5" y="2.5" width="12.5" height="8.5" fill="#e8cc8a"/><path d="M0.5 11V2.5H13" stroke="#d9a520" fill="none"/><path d="M13 2.5V11H0.5" stroke="#c0602a" fill="none"/></svg>
<svg style="position:absolute;left:423px;top:469px" width="11" height="12" viewBox="0 0 11 12"><path d="M0.5 0.5H6.5L9.5 3.5V10.5H0.5Z" fill="#f4f6ff" stroke="#6a6ab0"/><text x="-0.5" y="8" font-family="Liberation Mono" font-size="5" fill="#a04a10" font-weight="bold">SQL</text></svg>
<div class="t" style="left:438px;top:467px;font-size:11.5px;color:#111;-webkit-text-stroke:0.15px #111;transform:scaleX(0.9884);">Queries</div>
<svg style="position:absolute;left:435px;top:485px" width="13" height="15" viewBox="0 0 13 15"><path d="M0.5 0.5H8.5L12 4V14H0.5Z" fill="url(#gBody)" stroke="#2a2a70"/><text x="-0.5" y="9.5" font-family="Liberation Mono" font-size="6.5" fill="#a04a10" font-weight="bold">SQL</text></svg>
<div class="t" style="left:455.5px;top:487px;font-size:11.5px;color:#111;-webkit-text-stroke:0.15px #111;transform:scaleX(1.0095);">Show Table List</div>
<svg style="position:absolute;left:404px;top:508px" width="9" height="9" viewBox="0 0 9 9"><rect x="0.5" y="0.5" width="8" height="8" rx="1.2" fill="url(#gTog)" stroke="#8e8e8e"/><path d="M2 4.5H7" stroke="#3853a4" stroke-width="1"/></svg>
<svg style="position:absolute;left:417px;top:504px" width="14" height="12" viewBox="0 0 14 12"><path d="M0.5 2.5V1.2Q0.5 0.5 1.2 0.5H5.5L6.5 2.5" fill="#e8cc8a" stroke="#d9a520"/><rect x="0.5" y="2.5" width="12.5" height="8.5" fill="#e8cc8a"/><path d="M0.5 11V2.5H13" stroke="#d9a520" fill="none"/><path d="M13 2.5V11H0.5" stroke="#c0602a" fill="none"/></svg>
<svg style="position:absolute;left:421px;top:507px" width="13" height="13" viewBox="0 0 13 13"><path d="M6.5 2.5V8.5Q6.5 9.5 9 9.5T11.5 8.5V2.5" fill="url(#gCylO)" stroke="#a5552a"/><ellipse cx="9" cy="2.5" rx="2.5" ry="1.3" fill="#eee" stroke="#a5552a"/><rect x="0.5" y="6.5" width="6" height="4" rx="1" fill="url(#gMon)" stroke="#3a5ab0"/><rect x="0.5" y="10.5" width="6" height="2" rx="0.5" fill="#e8eef8" stroke="#6a8ac0"/><path d="M9 9.5V11.5H6.5" stroke="#1a9a1a"/></svg>
<div class="t" style="left:438px;top:507px;font-size:11.5px;color:#111;-webkit-text-stroke:0.15px #111;transform:scaleX(1.0449);">Connections</div>
<svg style="position:absolute;left:434px;top:524px" width="17" height="17" viewBox="0 0 17 17"><path d="M7.5 3V11.5Q7.5 12.5 11 12.5T14.5 11.5V3" fill="url(#gCylO)" stroke="#a5552a"/><ellipse cx="11" cy="3" rx="3.5" ry="1.8" fill="#eee" stroke="#a5552a"/><path d="M11 12.5V14.5H7" stroke="#1a9a1a" fill="none" stroke-width="1.2"/><rect x="0.5" y="6.5" width="7.5" height="6" rx="1" fill="url(#gMon)" stroke="#3a5ab0"/><rect x="0.5" y="13" width="8" height="3" rx="1" fill="#e8eef8" stroke="#6a8ac0"/></svg>
<div class="t" style="left:455.5px;top:527px;font-size:11.5px;color:#111;-webkit-text-stroke:0.15px #111;transform:scaleX(0.9952);">orders (dev)</div>
<svg style="position:absolute;left:434px;top:544px" width="17" height="17" viewBox="0 0 17 17"><path d="M7.5 3V11.5Q7.5 12.5 11 12.5T14.5 11.5V3" fill="url(#gCylG)" stroke="#6e6e6e"/><ellipse cx="11" cy="3" rx="3.5" ry="1.8" fill="#eee" stroke="#6e6e6e"/><path d="M11 12.5V14.5H7" stroke="#444" fill="none" stroke-width="1.2"/><rect x="0.5" y="6.5" width="7.5" height="6" rx="1" fill="url(#gMonG)" stroke="#666"/><rect x="0.5" y="13" width="8" height="3" rx="1" fill="#e8eef8" stroke="#888"/></svg>
<div class="t" style="left:455.5px;top:547px;font-size:11.5px;color:#111;-webkit-text-stroke:0.15px #111;transform:scaleX(1.0215);">orders (prod)</div>
<svg style="position:absolute;left:434px;top:564px" width="17" height="17" viewBox="0 0 17 17"><path d="M7.5 3V11.5Q7.5 12.5 11 12.5T14.5 11.5V3" fill="url(#gCylG)" stroke="#6e6e6e"/><ellipse cx="11" cy="3" rx="3.5" ry="1.8" fill="#eee" stroke="#6e6e6e"/><path d="M11 12.5V14.5H7" stroke="#444" fill="none" stroke-width="1.2"/><rect x="0.5" y="6.5" width="7.5" height="6" rx="1" fill="url(#gMonG)" stroke="#666"/><rect x="0.5" y="13" width="8" height="3" rx="1" fill="#e8eef8" stroke="#888"/></svg>
<div class="t" style="left:455.5px;top:567px;font-size:11.5px;color:#111;-webkit-text-stroke:0.15px #111;transform:scaleX(1.0027);">orders (uat)</div>
<svg style="position:absolute;left:400px;top:584px" width="15" height="16" viewBox="0 0 15 16"><path d="M0.5 3.0V13.0A7.0 2.5 0 0 0 14.5 13.0V3.0" fill="url(#gCylG)" stroke="#6e6e6e"/><path d="M0.8 6.72A7.0 2.5 0 0 0 14.2 6.72M0.8 9.92A7.0 2.5 0 0 0 14.2 9.92" stroke="#8a8a8a" fill="none"/><ellipse cx="7.5" cy="3.0" rx="7.0" ry="2.5" fill="#ececec" stroke="#6e6e6e"/></svg>
<div class="t" style="left:421px;top:587px;font-size:11.5px;color:#111;-webkit-text-stroke:0.15px #111;transform:scaleX(0.9685);">Website_DB</div>
<svg style="position:absolute;left:386px;top:104px" width="14" height="15" viewBox="0 0 14 15"><path d="M0.5 3.0V12.0A6.5 2.5 0 0 0 13.5 12.0V3.0" fill="url(#gCylO)" stroke="#a5552a"/><path d="M0.8 6.3A6.5 2.5 0 0 0 13.2 6.3M0.8 9.3A6.5 2.5 0 0 0 13.2 9.3" stroke="#b8683e" fill="none"/><ellipse cx="7.0" cy="3.0" rx="6.5" ry="2.5" fill="#f2f2f2" stroke="#a5552a"/></svg>
<svg style="position:absolute;left:391px;top:111px" width="10" height="10" viewBox="0 0 10 10"><circle cx="4" cy="4" r="2.8" fill="#cfe8ff" stroke="#2a8ad8" stroke-width="1.2"/><path d="M6 6L9 9" stroke="#2a8ad8" stroke-width="1.6"/></svg>
<svg style="position:absolute;left:523px;top:104px" width="16" height="16" viewBox="0 0 16 16"><path d="M3 6V11.5H9M6 2.5H10" stroke="#222" stroke-width="1" fill="none"/><rect x="0.5" y="0.5" width="5.5" height="5.5" fill="url(#gSq)" stroke="#3c3cc0"/><rect x="9.5" y="0.5" width="5.5" height="5" fill="url(#gSq)" stroke="#3c3cc0"/><path d="M9.5 8.5H15V14.5H9.5Z" fill="url(#gSq)" stroke="#3c3cc0"/><path d="M15 1V5.5M10 14.5H15V8.5" stroke="#222" fill="none"/><path d="M5.8 1V5.8H1" stroke="#222" fill="none"/></svg>
<svg style="position:absolute;left:12px;top:50px" width="16" height="18" viewBox="0 0 16 18"><path d="M4.5 4.5H11.5L14.5 7.5V16.5H4.5Z" fill="#f4f8ff" stroke="#2a3aa8"/><path d="M5.5 15.5H13.5" stroke="#8aa0e0"/><polygon points="5.00,0.40 5.76,2.17 7.55,1.45 6.83,3.24 8.60,4.00 6.83,4.76 7.55,6.55 5.76,5.83 5.00,7.60 4.24,5.83 2.45,6.55 3.17,4.76 1.40,4.00 3.17,3.24 2.45,1.45 4.24,2.17" fill="#f4dc20" stroke="#a89010" stroke-width="0.6"/><circle cx="5" cy="4" r="1.51" fill="#fff"/></svg>
<svg style="position:absolute;left:36px;top:51px" width="18" height="16" viewBox="0 0 18 16"><path d="M0.5 4.5V14.5H13L16.5 8H4L1 14" fill="#f6e09a" stroke="#b07a20"/><path d="M0.5 4.5H5.5L6.5 5.5H12V8" fill="#f8e8b0" stroke="#b07a20"/><path d="M9 3Q11 0.5 14 2.5" stroke="#3a5ab8" stroke-width="1.4" fill="none"/><path d="M13 0.5L15 3L12 4Z" fill="#3a5ab8"/></svg>
<svg style="position:absolute;left:59px;top:58px" width="6" height="4" viewBox="0 0 6 4"><path d="M0 0H6L3 3Z" fill="#555"/></svg>
<svg style="position:absolute;left:70px;top:51px" width="16" height="16" viewBox="0 0 16 16"><rect x="1" y="1" width="14" height="14" fill="#aeb0e6" stroke="#8d90d0"/><rect x="3.5" y="1.5" width="9" height="6" fill="#f2f2fa"/><rect x="4" y="10" width="8" height="5" fill="#8b8bb8"/><rect x="5" y="11" width="2" height="2" fill="#dde"/></svg>
<svg style="position:absolute;left:102px;top:51px" width="12" height="16" viewBox="0 0 12 16"><path d="M3 1L8 10M9 1L4 10" stroke="#9aaedc" stroke-width="1.2"/><circle cx="3" cy="12.5" r="2.3" fill="none" stroke="#8aa2d8" stroke-width="1.3"/><circle cx="9" cy="12.5" r="2.3" fill="none" stroke="#8aa2d8" stroke-width="1.3"/></svg>
<svg style="position:absolute;left:122px;top:51px" width="15" height="16" viewBox="0 0 15 16"><rect x="0.5" y="4.5" width="9" height="10" fill="#c0c0d8" stroke="#9a9ab8"/><path d="M4.5 0.5H11.5L14 3V12.5H4.5Z" fill="#eef0fa" stroke="#9a9ed0"/><path d="M6.5 4H11.5M6.5 6H12M6.5 8H12M6.5 10H12" stroke="#9aa2d8"/></svg>
<svg style="position:absolute;left:144px;top:51px" width="17" height="17" viewBox="0 0 17 17"><rect x="0.5" y="1.5" width="13" height="13" fill="#e4e6f6" stroke="#a4a8d8"/><rect x="4" y="0.5" width="6" height="3" fill="#cfd2ea" stroke="#a4a8d8"/><path d="M7.5 7.5H13.5L16 10V16.5H7.5Z" fill="#f4f5fc" stroke="#a4a8d8"/><path d="M9.5 11H14M9.5 13H14" stroke="#a4a8d8"/></svg>
<svg style="position:absolute;left:167px;top:52px" width="14" height="14" viewBox="0 0 14 14"><path d="M3.5 4.5Q10 1.5 12.5 6.5Q13 11 8 12.5" stroke="#a4b4e4" stroke-width="2" fill="none"/><path d="M0.5 3L5.5 0.5L5 7Z" fill="#a4b4e4"/></svg>
<svg style="position:absolute;left:190px;top:52px" width="14" height="14" viewBox="0 0 14 14"><path d="M10.5 4.5Q4 1.5 1.5 6.5Q1 11 6 12.5" stroke="#a4b4e4" stroke-width="2" fill="none"/><path d="M13.5 3L8.5 0.5L9 7Z" fill="#a4b4e4"/></svg>
<svg style="position:absolute;left:219px;top:50px" width="16" height="18" viewBox="0 0 16 18"><path d="M0.5 0.5H9.5L12 3V15.5H0.5Z" fill="#e8ecf8" stroke="#b0b0e0"/><circle cx="6" cy="8.5" r="4" fill="#c8d0f4" stroke="#555" stroke-width="1"/><path d="M8.8 11.5L13.5 16" stroke="#b8a050" stroke-width="2"/></svg>
<svg style="position:absolute;left:241px;top:50px" width="14" height="17" viewBox="0 0 14 17"><path d="M0.5 0.5H10L13 3.5V15.5H0.5Z" fill="#f4f4f8" stroke="#b4b4cc"/><path d="M3.5 1V15M10.5 4V15M0.5 13.5H13" stroke="#b4b4cc"/></svg>
<svg style="position:absolute;left:261px;top:51px" width="18" height="16" viewBox="0 0 18 16"><rect x="5" y="0.5" width="7" height="4" fill="#a8d8f0"/><rect x="0.5" y="3.5" width="16" height="7" rx="1.5" fill="#eaf0f8" stroke="#888"/><rect x="13" y="5.5" width="2" height="2" fill="#4c4"/><rect x="4.5" y="7.5" width="8" height="7" fill="#dde6f6" stroke="#a0a0d8"/></svg>
<svg style="position:absolute;left:291px;top:50px" width="18" height="18" viewBox="0 0 18 18"><rect x="0.5" y="0.5" width="11" height="12" fill="url(#gYel)" stroke="#5a5ac8"/><rect x="4.5" y="3" width="8" height="8" fill="#f4e070" stroke="#5a5ac8"/><circle cx="8" cy="8" r="4" fill="#c8d4ff" stroke="#000" stroke-width="1.2"/><path d="M11 11L15.5 15.5" stroke="#b89a20" stroke-width="2.2"/></svg>
<svg style="position:absolute;left:315px;top:50px" width="17" height="18" viewBox="0 0 17 18"><rect x="0.5" y="0.5" width="11" height="15" fill="#fff" stroke="#5a5ac8" stroke-width="1.2"/><path d="M2.5 10H9.5M2.5 12.5H9.5" stroke="#445"/><circle cx="6.5" cy="5" r="3.6" fill="#c8d4ff" stroke="#000" stroke-width="1.2"/><path d="M9 7.5L14 12.5" stroke="#b89a20" stroke-width="2.2"/></svg>
<svg style="position:absolute;left:501px;top:50px" width="17" height="17" viewBox="0 0 17 17"><circle cx="8" cy="8" r="7.3" fill="#d8d8f4" stroke="#5060d0" stroke-width="1.1"/><circle cx="8" cy="8" r="5.6" fill="#6e6ec4"/><text x="5" y="11.8" font-family="Liberation Sans" font-size="9.5" fill="#fff">?</text></svg>
<svg style="position:absolute;left:524px;top:63px" width="6" height="4" viewBox="0 0 6 4"><path d="M0 0H6L3 3Z" fill="#555"/></svg>
<div style="left:538px;top:51px;width:2px;height:2px;background:#c0c0c0"></div>
<div style="left:538px;top:55px;width:2px;height:2px;background:#c0c0c0"></div>
<div style="left:538px;top:59px;width:2px;height:2px;background:#c0c0c0"></div>
<div style="left:538px;top:63px;width:2px;height:2px;background:#c0c0c0"></div>
<svg style="position:absolute;left:546px;top:50px" width="15" height="17" viewBox="0 0 15 17"><rect x="2.5" y="2.5" width="11" height="13.5" fill="#f2f2fa" stroke="#6a6ac0"/><path d="M5 9H11M5 12H11M5 14.5H11" stroke="#555"/><polygon points="4.00,0.40 4.76,2.17 6.55,1.45 5.83,3.24 7.60,4.00 5.83,4.76 6.55,6.55 4.76,5.83 4.00,7.60 3.24,5.83 1.45,6.55 2.17,4.76 0.40,4.00 2.17,3.24 1.45,1.45 3.24,2.17" fill="#f4dc20" stroke="#a89010" stroke-width="0.6"/><circle cx="4" cy="4" r="1.51" fill="#fff"/></svg>
<svg style="position:absolute;left:570px;top:52px" width="14" height="14" viewBox="0 0 14 14"><defs><linearGradient id="gGr" x1="0" y1="0" x2="1" y2="1"><stop offset="0" stop-color="#fff"/><stop offset="1" stop-color="#888"/></linearGradient></defs><rect x="0.5" y="0.5" width="12" height="12" fill="url(#gGr)" stroke="#999"/></svg>
<svg style="position:absolute;left:592px;top:51px" width="15" height="16" viewBox="0 0 15 16"><path d="M0.5 0.5H10.5L13.5 3.5V14.5H0.5Z" fill="#e8eefc" stroke="#a0a8d8"/><path d="M2.5 3.5H10M2.5 6H11M2.5 8.5H11M2.5 11H11" stroke="#8890c0"/></svg>
<svg style="position:absolute;left:614px;top:51px" width="14" height="15" viewBox="0 0 14 15"><text x="0.5" y="13.5" font-family="Liberation Serif" font-size="16" font-weight="bold" fill="#8a8a94">A</text></svg>
<svg style="position:absolute;left:636px;top:51px" width="15" height="16" viewBox="0 0 15 16"><path d="M0.5 0.5H10.5L13.5 3.5V14.5H0.5Z" fill="#eef2fc" stroke="#a0a8d8"/><rect x="2.5" y="4.5" width="3" height="3" fill="none" stroke="#8890c0"/><rect x="7.5" y="9" width="3" height="3" fill="none" stroke="#8890c0"/><path d="M4 7.5V10.5H7.5" stroke="#8890c0" fill="none"/></svg>
<svg style="position:absolute;left:657px;top:51px" width="16" height="16" viewBox="0 0 16 16"><rect x="0.5" y="0.5" width="3.5" height="3.5" fill="#f08080" stroke="#c04040"/><rect x="0.5" y="6" width="3.5" height="3.5" fill="#a0b0f0" stroke="#5060c0"/><rect x="0.5" y="11.5" width="3.5" height="3.5" fill="#80d080" stroke="#309030"/><path d="M6 2.5H15M6 8H15M6 13.5H15" stroke="#6a6a8a" stroke-width="1.6" stroke-dasharray="1.5 0.6"/></svg>
<svg style="position:absolute;left:686px;top:50px" width="18" height="18" viewBox="0 0 18 18"><circle cx="7" cy="7" r="6.3" fill="#7aaad8" stroke="#6a8ab0"/><path d="M2 5Q6 3 7 7T12 9" stroke="#c8e0c0" stroke-width="1.5" fill="none"/><ellipse cx="9" cy="14.5" rx="3" ry="2" fill="none" stroke="#c8a040" stroke-width="1.4"/><ellipse cx="13.5" cy="14.5" rx="3" ry="2" fill="none" stroke="#c8a040" stroke-width="1.4"/></svg>
<svg style="position:absolute;left:709px;top:51px" width="16" height="16" viewBox="0 0 16 16"><path d="M1 15L15 1" stroke="#3a4ab8" stroke-width="1.4" stroke-dasharray="2.2 1.6"/></svg>
<svg style="position:absolute;left:731px;top:63px" width="6" height="4" viewBox="0 0 6 4"><path d="M0 0H6L3 3Z" fill="#555"/></svg>
<div style="left:745px;top:51px;width:2px;height:2px;background:#c0c0c0"></div>
<div style="left:745px;top:55px;width:2px;height:2px;background:#c0c0c0"></div>
<div style="left:745px;top:59px;width:2px;height:2px;background:#c0c0c0"></div>
<div style="left:745px;top:63px;width:2px;height:2px;background:#c0c0c0"></div>
<svg style="position:absolute;left:754px;top:52px" width="17" height="16" viewBox="0 0 17 16"><rect x="0.5" y="0.5" width="13" height="12.5" fill="#eef4ff" stroke="#2a3ab0" stroke-width="1.2"/><path d="M5 1V13M0.5 4.5H13.5" stroke="#2a3ab0"/><rect x="7.5" y="8" width="8" height="7.5" fill="#4a4aa8"/><rect x="9.5" y="12" width="3" height="3" fill="#fff"/></svg>
<svg style="position:absolute;left:776px;top:51px" width="16" height="16" viewBox="0 0 16 16"><rect x="0.5" y="3.5" width="13" height="11" fill="#eef4ff" stroke="#2a3ab0" stroke-width="1.2"/><path d="M5 4V14.5M0.5 7.5H13.5" stroke="#2a3ab0"/><path d="M1.5 7L7 1.5L13 4L8 9Z" fill="#d0c030" stroke="#6a6a20"/><rect x="13.5" y="0.5" width="2" height="6" fill="#222"/></svg>
<svg style="position:absolute;left:1px;top:1px" width="18" height="18" viewBox="0 0 18 18"><circle cx="9" cy="9" r="8" fill="#fff" stroke="#4a4ad8" stroke-width="1.5"/><path d="M5 5.5Q9 2 13 5.5Q9 9 5 12.5Q9 16 13 12.5Q9 9 5 5.5Z" fill="none" stroke="#4a4ad8" stroke-width="1.3"/><path d="M5.5 9Q9 5 12.5 9Q9 13 5.5 9Z" fill="none" stroke="#4a4ad8" stroke-width="1.1"/></svg>
<svg style="position:absolute;left:35px;top:111px" width="17" height="16" viewBox="0 0 17 16"><rect x="1.5" y="2.5" width="14" height="12.5" fill="url(#gYel)" stroke="#3a3a9a"/><ellipse cx="8" cy="10" rx="3.5" ry="2.5" fill="#7a7ad8"/><polygon points="4.00,0.40 4.76,2.17 6.55,1.45 5.83,3.24 7.60,4.00 5.83,4.76 6.55,6.55 4.76,5.83 4.00,7.60 3.24,5.83 1.45,6.55 2.17,4.76 0.40,4.00 2.17,3.24 1.45,1.45 3.24,2.17" fill="#f4dc20" stroke="#a89010" stroke-width="0.6"/><circle cx="4" cy="4" r="1.51" fill="#fff"/></svg>
<svg style="position:absolute;left:57px;top:111px" width="17" height="16" viewBox="0 0 17 16"><path d="M1.5 5.5H7L8.5 7.5H15.5V14.5H1.5Z" fill="#f0d840" stroke="#7a7a9a"/><polygon points="5.00,0.40 5.76,2.17 7.55,1.45 6.83,3.24 8.60,4.00 6.83,4.76 7.55,6.55 5.76,5.83 5.00,7.60 4.24,5.83 2.45,6.55 3.17,4.76 1.40,4.00 3.17,3.24 2.45,1.45 4.24,2.17" fill="#f4dc20" stroke="#a89010" stroke-width="0.6"/><circle cx="5" cy="4" r="1.51" fill="#fff"/></svg>
<svg style="position:absolute;left:79px;top:111px" width="17" height="16" viewBox="0 0 17 16"><rect x="10" y="1.5" width="5" height="4.5" fill="#e8f0ff" stroke="#3a5ad8"/><rect x="10" y="9.5" width="5" height="5" fill="#e8f0ff" stroke="#3a5ad8"/><path d="M4 6V12H10M7 3.5H10" stroke="#222" fill="none"/><polygon points="4.00,0.40 4.76,2.17 6.55,1.45 5.83,3.24 7.60,4.00 5.83,4.76 6.55,6.55 4.76,5.83 4.00,7.60 3.24,5.83 1.45,6.55 2.17,4.76 0.40,4.00 2.17,3.24 1.45,1.45 3.24,2.17" fill="#f4dc20" stroke="#a89010" stroke-width="0.6"/><circle cx="4" cy="4" r="1.51" fill="#fff"/></svg>
<svg style="position:absolute;left:101px;top:111px" width="17" height="16" viewBox="0 0 17 16"><rect x="3.5" y="2.5" width="11" height="13" fill="#eef2ff" stroke="#4a4ab0"/><path d="M5 7.5H13M5 10H13M5 12.5H13" stroke="#4a4ab0" stroke-width="1.3"/><polygon points="4.00,0.40 4.76,2.17 6.55,1.45 5.83,3.24 7.60,4.00 5.83,4.76 6.55,6.55 4.76,5.83 4.00,7.60 3.24,5.83 1.45,6.55 2.17,4.76 0.40,4.00 2.17,3.24 1.45,1.45 3.24,2.17" fill="#f4dc20" stroke="#a89010" stroke-width="0.6"/><circle cx="4" cy="4" r="1.51" fill="#fff"/></svg>
<div style="left:125px;top:110px;width:1px;height:19px;background:#c8c8c8"></div>
<svg style="position:absolute;left:130px;top:111px" width="18" height="16" viewBox="0 0 18 16"><path d="M0.5 3.5V1H4L5 2H10V8H0.5Z" fill="#f0e060" stroke="#8a8a40"/><path d="M5 6H8.5V12H5ZM10 6H13.5V12H10Z" fill="#222"/><rect x="8" y="7" width="2.5" height="3" fill="#444"/><rect x="4" y="11" width="5.5" height="4.5" rx="1" fill="#1a1a2a"/><rect x="9.5" y="11" width="5.5" height="4.5" rx="1" fill="#1a1a2a"/><rect x="5.5" y="12.5" width="2" height="1.5" fill="#8af"/><rect x="11" y="12.5" width="2" height="1.5" fill="#8af"/></svg>
<div style="left:155px;top:110px;width:1px;height:19px;background:#c8c8c8"></div>
<svg style="position:absolute;left:163px;top:111px" width="17" height="16" viewBox="0 0 17 16"><path d="M1.5 1.5H10L13 4.5V15.5H1.5Z" fill="#eef2ff" stroke="#4a5a9a"/><path d="M3.5 6H10M3.5 8.5H9M3.5 11H8" stroke="#4a5a9a"/><path d="M7 14L15 5" stroke="#2a3a7a" stroke-width="2"/></svg>
<svg style="position:absolute;left:185px;top:118px" width="6" height="4" viewBox="0 0 6 4"><path d="M0 0H6L3 3Z" fill="#666"/></svg>
<svg style="position:absolute;left:199px;top:111px" width="17" height="16" viewBox="0 0 17 16"><rect x="1" y="1" width="11" height="9" fill="#dde6ff" stroke="#4a5ab0"/><rect x="3.5" y="3.5" width="11" height="9" fill="#dde6ff" stroke="#4a5ab0"/><rect x="5.5" y="6" width="10" height="9" fill="#eef2ff" stroke="#4a5ab0"/><path d="M7.5 9H13.5M7.5 11H13.5M7.5 13H13.5" stroke="#4a5ab0"/></svg>
<svg style="position:absolute;left:220px;top:118px" width="6" height="4" viewBox="0 0 6 4"><path d="M0 0H6L3 3Z" fill="#666"/></svg>
<div style="left:233px;top:110px;width:1px;height:19px;background:#c8c8c8"></div>
<svg style="position:absolute;left:240px;top:111px" width="15" height="16" viewBox="0 0 15 16"><path d="M7.5 1L14 8H10V15H5V8H1Z" fill="url(#gGrn)"/></svg>
<svg style="position:absolute;left:262px;top:111px" width="15" height="16" viewBox="0 0 15 16"><path d="M7.5 15L14 8H10V1H5V8H1Z" fill="url(#gGrn)"/></svg>
<div style="left:285px;top:110px;width:1px;height:19px;background:#c8c8c8"></div>
<svg style="position:absolute;left:291px;top:111px" width="16" height="16" viewBox="0 0 16 16"><circle cx="8" cy="8" r="7.3" fill="#d8d8f4" stroke="#5060d0" stroke-width="1.1"/><circle cx="8" cy="8" r="5.6" fill="#6e6ec4"/><text x="5" y="11.8" font-family="Liberation Sans" font-size="9.5" fill="#fff">?</text></svg>
<svg style="position:absolute;left:36px;top:732px" width="16" height="16" viewBox="0 0 16 16"><rect x="1" y="1" width="4.5" height="4.5" fill="#fff" stroke="#223"/><rect x="1" y="9" width="4.5" height="4.5" fill="#fff" stroke="#223"/><path d="M2 3.2H4.5M3.2 2V4.5M2 11.2H4.5M3.2 10V12.5" stroke="#223"/><path d="M7 2H14M7 4.5H14M7 7H14M7 10H14M7 12.5H14M7 14.5H12" stroke="#334" stroke-width="1"/></svg>
<svg style="position:absolute;left:58px;top:732px" width="15" height="16" viewBox="0 0 15 16"><text x="0.5" y="7" font-family="Liberation Sans" font-size="7.5" fill="#222">A</text><text x="0.5" y="15" font-family="Liberation Sans" font-size="7.5" fill="#222">Z</text><path d="M10.5 1V14M8 11.5L10.5 14.5L13 11.5" stroke="#1a8a3a" fill="none" stroke-width="1.2"/></svg>
<svg style="position:absolute;left:80px;top:732px" width="16" height="16" viewBox="0 0 16 16"><path d="M1 9L7 3H12V8L6 14Z" fill="#9ab4e8" stroke="#4a6ac0"/><circle cx="9.5" cy="5" r="1" fill="#fff"/><polygon points="12.00,1.20 12.59,2.58 13.98,2.02 13.42,3.41 14.80,4.00 13.42,4.59 13.98,5.98 12.59,5.42 12.00,6.80 11.41,5.42 10.02,5.98 10.58,4.59 9.20,4.00 10.58,3.41 10.02,2.02 11.41,2.58" fill="#f4dc20" stroke="#a89010" stroke-width="0.6"/><circle cx="12" cy="4" r="1.18" fill="#fff"/></svg>
<svg style="position:absolute;left:101px;top:732px" width="17" height="16" viewBox="0 0 17 16"><rect x="1" y="2.5" width="12" height="11.5" fill="#eef2fa" stroke="#9aa8cc"/><path d="M3 5.5H10M3 8H9M3 10.5H8" stroke="#9aa8cc"/><path d="M8 13L15.5 4.5" stroke="#8a98c0" stroke-width="2"/></svg>
<svg style="position:absolute;left:124px;top:732px" width="15" height="16" viewBox="0 0 15 16"><path d="M2 2L13 14M13 2L2 14" stroke="#e05050" stroke-width="1.6"/></svg>
<svg style="position:absolute;left:154px;top:732px" width="15" height="16" viewBox="0 0 15 16"><path d="M1.5 7L6.5 1.5H12.5V8L7 14.5Z" fill="#a8c4f0" stroke="#4a6ac0"/><path d="M1.5 9L7 15.5L12.5 9.5" fill="none" stroke="#4a6ac0"/><circle cx="9.5" cy="4.5" r="1" fill="#fff"/></svg>
<svg style="position:absolute;left:175px;top:732px" width="16" height="16" viewBox="0 0 16 16"><rect x="1" y="2" width="3" height="2.5" fill="#4a5a7a"/><rect x="1" y="7" width="3" height="2.5" fill="#4a5a7a"/><rect x="1" y="12" width="3" height="2.5" fill="#4a5a7a"/><path d="M7 3L9 5L13 1M7.5 7L11.5 10.5M11.5 7L7.5 10.5M7 12.5L9 14.5L13 10.5" stroke="#222" fill="none" stroke-width="1.2"/></svg>
<svg style="position:absolute;left:197px;top:732px" width="17" height="16" viewBox="0 0 17 16"><circle cx="8.5" cy="8" r="7.3" fill="#d8d8f4" stroke="#5060d0" stroke-width="1.1"/><circle cx="8.5" cy="8" r="5.6" fill="#6e6ec4"/><text x="5.5" y="11.8" font-family="Liberation Sans" font-size="9.5" fill="#fff">?</text></svg>
<svg style="position:absolute;left:35px;top:1036px" width="17" height="16" viewBox="0 0 17 16"><rect x="0.5" y="5.5" width="11" height="10" fill="#f0f4ff" stroke="#3a5ab0"/><path d="M2 12L4 14M4 12L2 14M6 13L8 14.5L10.5 11" stroke="#3a5ab0"/><path d="M2 7L8 1.5L15 4L9 9Z" fill="#d8cc40" stroke="#6a6a20"/><rect x="14.5" y="0.5" width="2" height="6" fill="#222"/></svg>
<svg style="position:absolute;left:118px;top:1035px" width="15" height="16" viewBox="0 0 15 16"><path d="M1.5 6L6.5 1H12.5V7.5L7 13.5Z" fill="#a8c4f0" stroke="#4a6ac0"/><path d="M1.5 8L7 15L12.5 9.5" fill="none" stroke="#4a6ac0"/><circle cx="9.5" cy="4.5" r="1" fill="#fff"/></svg>
</body></html>
